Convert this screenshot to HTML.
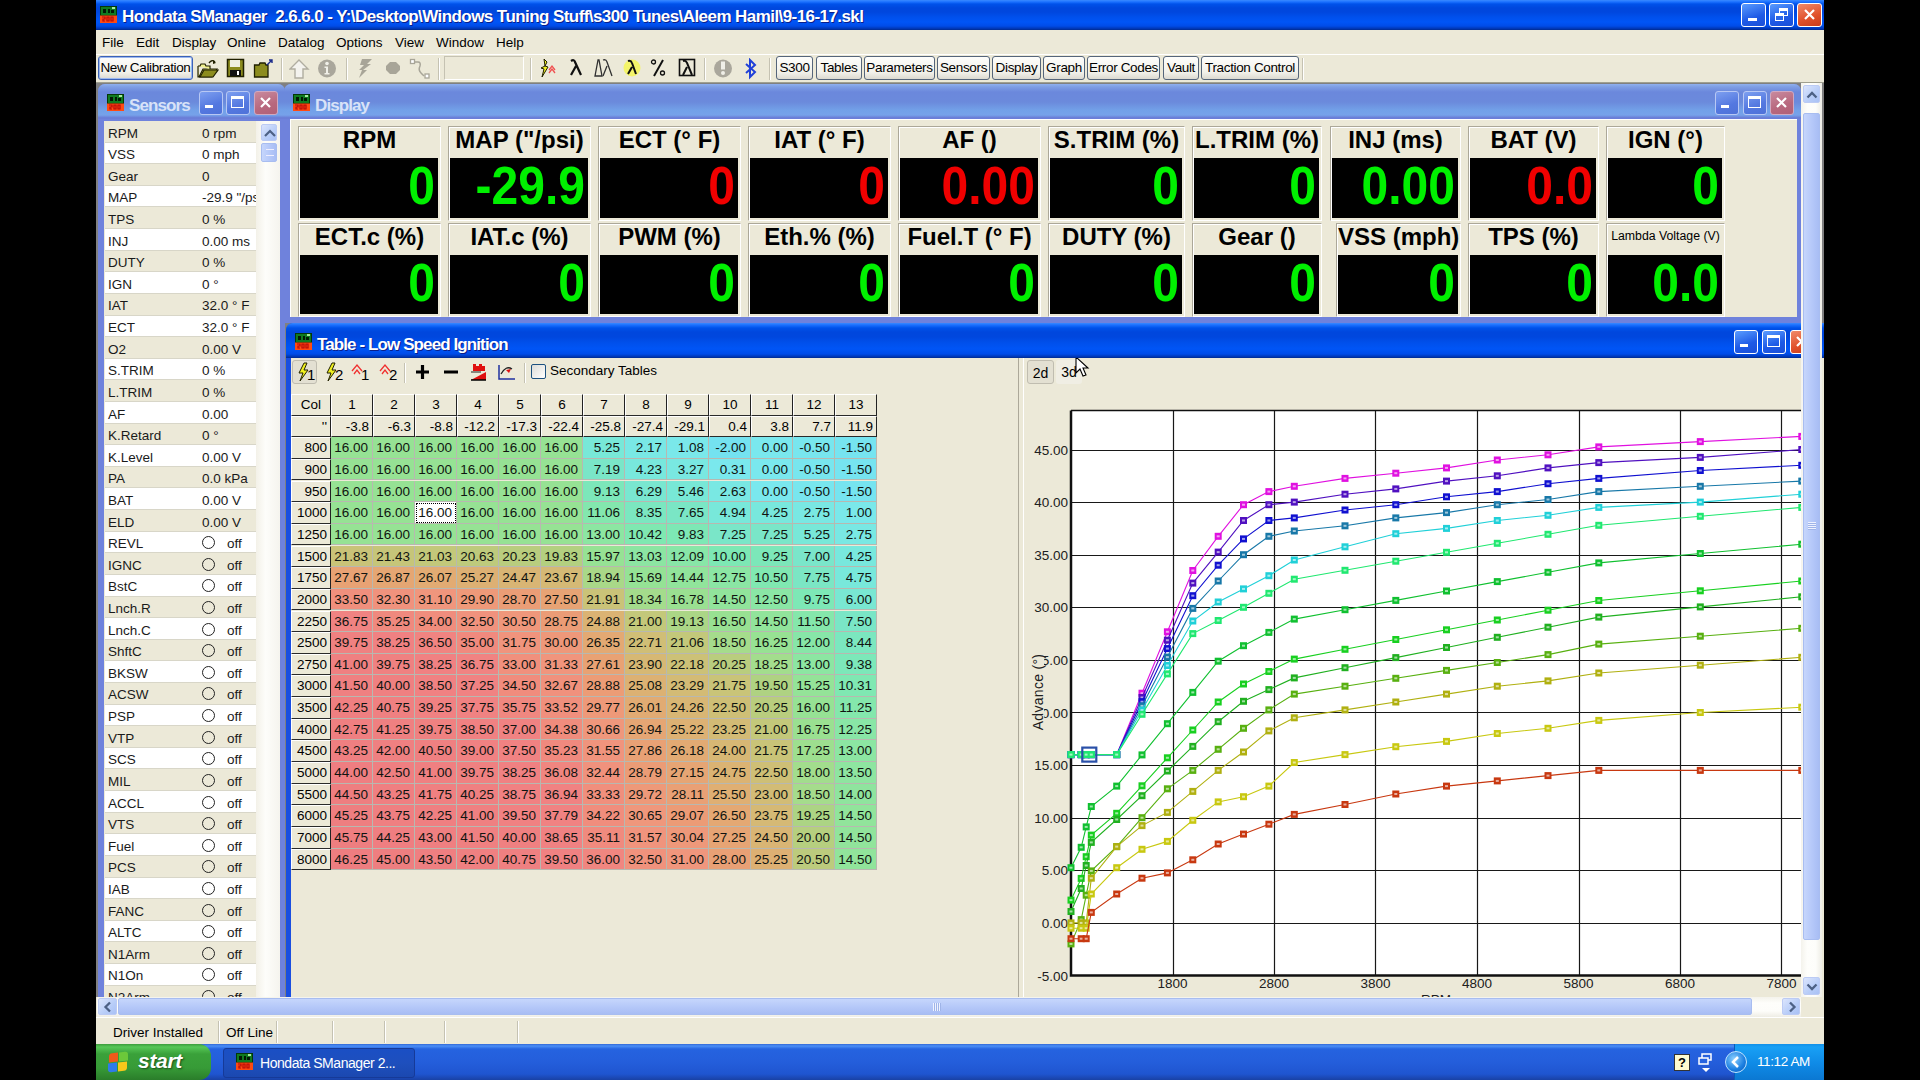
<!DOCTYPE html>
<html><head><meta charset="utf-8"><title>Hondata SManager</title>
<style>
*{box-sizing:border-box;margin:0;padding:0}
html,body{width:1920px;height:1080px;overflow:hidden;background:#000}
body{position:relative;font-family:"Liberation Sans",sans-serif;font-size:13.5px;color:#000}
.a{position:absolute}

.win{overflow:hidden;border-radius:7px 7px 0 0}
.win.in{background:#6f82dc}
.win.ac{background:#1a4fe0}
.wt{left:0;top:0;right:0;height:35px}
.win.in .wt{background:linear-gradient(180deg,#8fb0ee 0,#7e9de4 3px,#6b88dc 8px,#6b8adc 18px,#72a0e8 26px,#76a2ea 31px,#6b80d8 33.5px,#6b7cd8 35px)}
.win.ac .wt{background:linear-gradient(180deg,#3a8aff 0px,#1a70ff 2px,#0052ea 5px,#0047dd 9px,#0047de 14px,#0050ec 20px,#0055f6 26px,#004ce8 31px,#0038b8 33.5px,#002a90 35px)}
.wtt{top:11.5px;font-weight:bold;font-size:17px;white-space:nowrap;letter-spacing:-0.9px}
.win.in .wtt{color:#d8e2f8}
.win.ac .wtt{color:#fff;text-shadow:1px 1px 0 #0a1e8a}
.cbtn{width:24px;height:24px;border-radius:3px}
.win.in .cbtn{border:1px solid #b8c8f4;background:linear-gradient(160deg,#7d9ff0,#5478e0 60%,#4f72d8)}
.win.in .cbtn.cl{border:1px solid #d0a8c0;background:linear-gradient(160deg,#c88a9e,#b8687e 60%,#b06078)}
.win.ac .cbtn{border:1.5px solid #fff;background:linear-gradient(160deg,#5a9cff,#1e5ae6 60%,#1a4fd8)}
.win.ac .cbtn.cl{background:linear-gradient(160deg,#f08a6a,#e0502a 60%,#c83c1c)}
.cli{background:#ECE9D8;overflow:hidden}
.sbv{background:linear-gradient(90deg,#f3f1e8,#fdfdfa 40%,#f5f4ee)}
.sarrow{border:1px solid #bccbf4;border-radius:2px;background:linear-gradient(135deg,#dbe5fd,#b8cdf8 60%,#a9c1f5)}
.sthumb{border:1px solid #a8bdf0;border-radius:2px;background:linear-gradient(90deg,#c6d6fc,#b6c9f9 50%,#a8bdf4)}
.sthumbh{border:1px solid #a8bdf0;border-radius:2px;background:linear-gradient(180deg,#c6d6fc,#b6c9f9 50%,#a8bdf4)}


#scr{left:96px;top:0;width:1728px;height:1080px;background:#ECE9D8;overflow:hidden}
.tb{left:0;top:0;width:1728px;height:30px;
 background:linear-gradient(180deg,#3a8aff 0px,#1a70ff 2px,#0052ea 4px,#0047dd 8px,#0047de 12px,#0050ec 17px,#0055f6 22px,#004ce8 26px,#0038b8 28.5px,#002a90 30px);}
.ttl{left:26px;top:6.5px;color:#fff;font-weight:bold;font-size:17px;white-space:nowrap;text-shadow:1px 1px 0 #0a1e8a;letter-spacing:-0.57px}
.icon{width:17px;height:17px}
.icon .g{left:0;top:0;width:17px;height:9px;background:#0c7a18;border:1px solid #063c0a}
.icon .r{left:0;top:9px;width:17px;height:8px;background:#ff4a10}
.xbtn{width:25px;height:24px;border:1.5px solid #fff;border-radius:3px;background:linear-gradient(160deg,#5a9cff,#1e5ae6 60%,#1a4fd8)}
.xbtn.cl{background:linear-gradient(160deg,#f08a6a,#e0502a 60%,#c83c1c)}
.menu{left:0;top:30px;width:1728px;height:24px;background:#ECE9D8}
.mi{top:35px;font-size:13.5px;color:#000}
.tool{left:0;top:54px;width:1728px;height:29px;background:#ECE9D8;border-top:1px solid #fff;border-bottom:1px solid #a0a090}
.tbtn{top:56px;height:24px;white-space:nowrap;overflow:hidden;border:1.5px solid #55657a;border-radius:3px;background:linear-gradient(180deg,#fdfdfb,#f2f1ea 70%,#dcdad0);font-size:13.5px;line-height:21px;text-align:center;color:#000;letter-spacing:-0.35px}
.sep{top:58px;width:2px;height:22px;border-left:1px solid #c5c2b2;border-right:1px solid #fff}
.status{left:0;top:1017px;width:1728px;height:27px;background:#ECE9D8;border-top:1px solid #fff}
.ssep{top:1021px;width:2px;height:22px;border-left:1px solid #c5c2b2;border-right:1px solid #fff}
.task{left:0;top:1044px;width:1728px;height:36px;background:linear-gradient(180deg,#3168d5 0,#4b8ff6 2px,#2563e0 5px,#245edb 18px,#1f55d0 30px,#1941a5 36px)}
.start{left:0;top:1044px;width:115px;height:36px;border-radius:0 12px 12px 0;background:linear-gradient(180deg,#3c9c3c 0,#57c757 3px,#3aa13a 10px,#379b37 24px,#2a7d2a 36px);color:#fff;font-style:italic;font-weight:bold;font-size:21px;letter-spacing:-0.3px}
.tray{left:1638px;top:1044px;width:90px;height:36px;background:linear-gradient(180deg,#1290e8 0,#18a0f5 3px,#0f8ae6 20px,#0b78d2 36px);border-left:1px solid #0a5bb8}
.taskbtn{left:127px;top:1048px;width:192px;height:30px;border-radius:3px;background:linear-gradient(180deg,#1a4fc4,#1e4fbd 50%,#1b48b0);border:1px solid #163a98;color:#fff;font-size:14px}


.ti{top:58px}



.srow{left:0;width:151px;height:21.6px;border-bottom:1px solid #d8d6c8;font-size:13.5px;white-space:nowrap;overflow:hidden;color:#1a1a1a}
.srow.b{background:#ECE9D8}.srow.w{background:#fff}
.srow .l{left:3px;top:4.5px}
.srow .v{left:97px;top:4.5px}
.srow .o{left:97px;top:4.5px;width:13px;height:13px;border:1.3px solid #222;border-radius:50%}
.srow .f{left:122px;top:4.5px}


.gbox{border-top:1px solid #aca899;border-left:1px solid #aca899;border-right:1px solid #fff;border-bottom:1px solid #fff;box-shadow:inset 1px 1px 0 #fff}
.glab{left:1px;right:1px;top:-3px;height:31px;text-align:center;font-weight:bold;font-size:24px;line-height:31px;white-space:nowrap;color:#000}
.gblk{background:#000;text-align:right;font-weight:bold;font-size:48px;line-height:57px;white-space:nowrap;overflow:hidden}
.gg{color:#00f000}.gr{color:#f00000}


.hc{background:#ECE9D8;border-top:1px solid #fff;border-left:1px solid #fff;border-right:1px solid #222;border-bottom:1.5px solid #2a2a2a;font-size:13.5px;white-space:nowrap;line-height:19px}
.dc{border-right:1px solid #b8b8b0;border-bottom:1px solid #b8b8b0;font-size:13.5px;text-align:right;padding-right:4px;line-height:22px;color:#101410;white-space:nowrap}
.tbico{top:4px}


.trkv{background:linear-gradient(90deg,#f4f3ec,#fefefb 30%,#fdfdfa 70%,#eeede5)}
.trkh{background:linear-gradient(180deg,#f4f3ec,#fefefb 30%,#fdfdfa 70%,#eeede5)}




</style></head><body>

<div id="scr" class="a">
<div class="a tb"></div>
<svg class="a" style="left:4px;top:6px" width="17" height="17"><rect x="0.5" y="0.5" width="16" height="9" fill="#107a20" stroke="#043808"/><rect x="3" y="3" width="3" height="4" fill="#021a04"/><rect x="8" y="3" width="2" height="4" fill="#021a04"/><rect x="11" y="4" width="3" height="3" fill="#021a04"/><rect x="12" y="1" width="3" height="2" fill="#a8e8a0"/><rect x="0" y="9.5" width="17" height="7.5" fill="#ff4a12"/><path d="M2 11H5V13H3V15H5M7 11H9V15H7ZM11 11H13V15H11Z" stroke="#b80808" stroke-width="1.2" fill="none"/></svg>
<div class="a ttl">Hondata SManager&nbsp; 2.6.6.0 - Y:\Desktop\Windows Tuning Stuff\s300 Tunes\Aleem Hamil\9-16-17.skl</div>
<div class="a xbtn" style="left:1645px;top:3px"><div class="a" style="left:6px;top:14px;width:9px;height:3px;background:#fff"></div></div>
<div class="a xbtn" style="left:1673px;top:3px"><div class="a" style="left:9px;top:4px;width:9px;height:8px;border:1.5px solid #fff;border-top-width:3px"></div><div class="a" style="left:5px;top:9px;width:9px;height:8px;border:1.5px solid #fff;border-top-width:3px;background:#2a66e8"></div></div>
<div class="a xbtn cl" style="left:1701px;top:3px"><svg class="a" style="left:3px;top:3px" width="17" height="16"><path d="M4 3L13 12M13 3L4 12" stroke="#fff" stroke-width="2.2"/></svg></div>
<div class="a menu"></div>
<div class="a mi" style="left:6px">File</div>
<div class="a mi" style="left:40px">Edit</div>
<div class="a mi" style="left:76px">Display</div>
<div class="a mi" style="left:131px">Online</div>
<div class="a mi" style="left:182px">Datalog</div>
<div class="a mi" style="left:240px">Options</div>
<div class="a mi" style="left:299px">View</div>
<div class="a mi" style="left:340px">Window</div>
<div class="a mi" style="left:400px">Help</div>
<div class="a tool"></div>
<div class="a tbtn" style="left:2px;width:95px;border:1px solid #3b62b8;box-shadow:inset 0 0 0 1px #9cb8ef;">New Calibration</div>
<div class="a tbtn" style="left:680px;width:37px">S300</div>
<div class="a tbtn" style="left:720px;width:46px">Tables</div>
<div class="a tbtn" style="left:768px;width:71px">Parameters</div>
<div class="a tbtn" style="left:841px;width:53px">Sensors</div>
<div class="a tbtn" style="left:896px;width:49px">Display</div>
<div class="a tbtn" style="left:947px;width:42px">Graph</div>
<div class="a tbtn" style="left:991px;width:73px">Error Codes</div>
<div class="a tbtn" style="left:1067px;width:36px">Vault</div>
<div class="a tbtn" style="left:1105px;width:98px">Traction Control</div>
<div class="a sep" style="left:185px"></div>
<div class="a sep" style="left:250px"></div>
<div class="a sep" style="left:342px"></div>
<div class="a sep" style="left:434px"></div>
<div class="a sep" style="left:608px"></div>
<div class="a sep" style="left:673px"></div>
<div class="a sep" style="left:1206px"></div>
<div class="a" style="left:348px;top:56px;width:80px;height:24px;border:1px solid #c5c2b2;border-right-color:#fff;border-bottom-color:#fff;background:#ECE9D8"></div>
<div class="a status"></div>
<div class="a" style="left:17px;top:1025px;font-size:13.5px">Driver Installed</div>
<div class="a" style="left:130px;top:1025px;font-size:13.5px">Off Line</div>
<div class="a ssep" style="left:122px"></div>
<div class="a ssep" style="left:180px"></div>
<div class="a ssep" style="left:236px"></div>
<div class="a ssep" style="left:288px"></div>
<div class="a ssep" style="left:348px"></div>
<div class="a ssep" style="left:421px"></div>
<div class="a task"></div>
<div class="a start"><div class="a" style="left:42px;top:5px;text-shadow:1px 1px 2px #1a4a1a">start</div><div class="a" style="left:13px;top:9px;width:9px;height:9px;background:#f05a1a;border-radius:3px 0 0 0;transform:skewY(-6deg)"></div><div class="a" style="left:23px;top:8px;width:9px;height:9px;background:#6cc83a;border-radius:0 3px 0 0;transform:skewY(-6deg)"></div><div class="a" style="left:12px;top:19px;width:9px;height:9px;background:#2f7bea;border-radius:0 0 0 3px;transform:skewY(-6deg)"></div><div class="a" style="left:22px;top:18px;width:9px;height:9px;background:#f8c81a;border-radius:0 0 3px 0;transform:skewY(-6deg)"></div></div>
<div class="a taskbtn"><div class="a" style="left:36px;top:6px;white-space:nowrap;letter-spacing:-0.45px">Hondata SManager 2...</div></div>
<svg class="a" style="left:140px;top:1053px" width="17" height="17"><rect x="0.5" y="0.5" width="16" height="9" fill="#107a20" stroke="#043808"/><rect x="3" y="3" width="3" height="4" fill="#021a04"/><rect x="8" y="3" width="2" height="4" fill="#021a04"/><rect x="11" y="4" width="3" height="3" fill="#021a04"/><rect x="12" y="1" width="3" height="2" fill="#a8e8a0"/><rect x="0" y="9.5" width="17" height="7.5" fill="#ff4a12"/><path d="M2 11H5V13H3V15H5M7 11H9V15H7ZM11 11H13V15H11Z" stroke="#b80808" stroke-width="1.2" fill="none"/></svg>
<div class="a tray"><div class="a" style="left:22px;top:10px;color:#fff;font-size:13.5px;letter-spacing:-0.4px;white-space:nowrap">11:12 AM</div><div class="a" style="left:-10px;top:7px;width:22px;height:22px;border-radius:11px;background:radial-gradient(circle at 40% 35%,#8cd0ff,#1a7ee0 60%,#0a5ab8);border:1px solid #bfe4ff"></div><svg class="a" style="left:-4px;top:12px" width="10" height="12"><path d="M7 1L2 6L7 11" stroke="#fff" stroke-width="2.5" fill="none"/></svg></div>
<div class="a" style="left:1578px;top:1054px;width:16px;height:17px;background:#fffbd0;border:1px solid #333;font-weight:bold;font-size:13px;text-align:center;line-height:15px">?</div>
<svg class="a" style="left:1600px;top:1052px" width="20" height="22"><rect x="6" y="2" width="9" height="6" fill="none" stroke="#fff" stroke-width="1.5"/><rect x="3" y="6" width="9" height="6" fill="#2563e0" stroke="#fff" stroke-width="1.5"/><path d="M6 16L14 16L10 20Z" fill="#fff"/></svg>
<svg class="a" style="left:101px;top:58px" width="22" height="22"><path d="M1 8V19H15L20 11H6L2 19" fill="#e8e878" stroke="#202000" stroke-width="1.2"/><path d="M1 8H3L4 6H8L9 8H13V11" fill="#f0f090" stroke="#202000" stroke-width="1.2"/><path d="M3 19L7 12H21L16 19Z" fill="#8c8c1e" stroke="#202000" stroke-width="1.2"/><path d="M12 5Q15 1 18 4" stroke="#202000" stroke-width="1.3" fill="none"/><path d="M16 2L19 5L16 6" fill="#202000"/></svg>
<svg class="a" style="left:130px;top:58px" width="20" height="22"><rect x="1.5" y="1.5" width="16" height="17" fill="#8c8c1e" stroke="#202000" stroke-width="1.5"/><rect x="4" y="2" width="10" height="7" fill="#f0f0e0"/><rect x="4" y="12" width="11" height="6" fill="#101010"/><rect x="11" y="13" width="2" height="4" fill="#fff"/></svg>
<svg class="a" style="left:157px;top:58px" width="22" height="22"><path d="M1.5 7H6L7 5H12L13 7H15V19H1.5Z" fill="#8c8c1e" stroke="#202000" stroke-width="1.3"/><path d="M14 7L19 2M16 2H19V5" stroke="#1a2a8a" stroke-width="1.4" fill="none"/></svg>
<svg class="a" style="left:193px;top:58px" width="21" height="22"><path d="M10 2L19 11H14V20H6V11H1Z" fill="#f4f3ee" stroke="#b0ada0" stroke-width="1.4"/></svg>
<svg class="a" style="left:221px;top:58px" width="21" height="22"><circle cx="10" cy="10.5" r="9" fill="#aaa79c"/><circle cx="10" cy="5.5" r="1.8" fill="#f0efe8"/><path d="M7.5 8.5H11V15H12.5V16.5H7.5V15H9V10H7.5Z" fill="#f0efe8"/></svg>
<svg class="a" style="left:261px;top:58px" width="17" height="22"><path d="M5 1H15L10 6H14L6 12H10L2 20L5 12H2L7 7H3Z" fill="#a8a598"/></svg>
<svg class="a" style="left:289px;top:58px" width="17" height="22"><path d="M5 4H11L15 8V12L11 16H5L1 12V8Z" fill="#a8a598"/></svg>
<svg class="a" style="left:313px;top:58px" width="22" height="22"><rect x="1.5" y="1.5" width="4" height="4" fill="#fff" stroke="#a8a598" stroke-width="1.3"/><path d="M5 4H9Q12 4 11 8Q9 12 12 15L15 18" stroke="#a8a598" stroke-width="1.5" fill="none"/><rect x="16" y="16" width="4" height="4" fill="#fff" stroke="#a8a598" stroke-width="1.3"/></svg>
<svg class="a" style="left:443px;top:58px" width="20" height="22"><path d="M5 1L6 8L2 10L5 11L3 19L9 9L6 8L8 4Z" fill="#f0f020" stroke="#202000" stroke-width="1"/><path d="M10 12L13 8L16 12M10 15L13 11L16 15" stroke="#f05050" stroke-width="1.3" fill="none"/></svg>
<svg class="a" style="left:473px;top:58px" width="15" height="22"><path d="M2 3Q5 1 6 4L12 17M7 8L2 17" stroke="#101010" stroke-width="2.2" fill="none"/></svg>
<svg class="a" style="left:498px;top:58px" width="20" height="22"><path d="M4 2L1 18H8L5 2Z" fill="none" stroke="#303030" stroke-width="1.3"/><path d="M9 2Q12 1 13 4L18 18M13 8L9 18" stroke="#303030" stroke-width="1.3" fill="none"/></svg>
<svg class="a" style="left:526px;top:58px" width="20" height="22"><circle cx="10" cy="10" r="8.5" fill="#f4f46a"/><path d="M6 3Q9 2 10 5L14 16M10 9L6 16" stroke="#101010" stroke-width="2" fill="none"/></svg>
<svg class="a" style="left:554px;top:58px" width="17" height="22"><circle cx="3.5" cy="4" r="2" fill="none" stroke="#101010" stroke-width="1.3"/><circle cx="12.5" cy="15" r="2" fill="none" stroke="#101010" stroke-width="1.3"/><path d="M13 2L4 18" stroke="#101010" stroke-width="2"/></svg>
<svg class="a" style="left:582px;top:58px" width="18" height="22"><rect x="1.5" y="1.5" width="15" height="16" fill="none" stroke="#101010" stroke-width="1.6"/><path d="M5 3Q8 2 9 5L14 17M9 9L5 17" stroke="#101010" stroke-width="2" fill="none"/></svg>
<svg class="a" style="left:617px;top:58px" width="20" height="22"><circle cx="10" cy="10.5" r="9" fill="#aaa79c"/><rect x="8" y="3.5" width="4" height="8" fill="#f0efe8"/><circle cx="10" cy="15" r="2" fill="#f0efe8"/></svg>
<svg class="a" style="left:648px;top:58px" width="15" height="22"><path d="M2 6L11 14L6 19V2L11 7L2 15" stroke="#2040d8" stroke-width="2" fill="none"/></svg>
<div id="mdi" class="a" style="left:0;top:83px;width:1728px;height:914px;overflow:hidden;background:#808080">
<div class="a win in" style="left:2px;top:1px;width:187px;height:940px">
<div class="a wt"></div>
<svg class="a" style="left:9px;top:10px" width="17" height="17"><rect x="0.5" y="0.5" width="16" height="9" fill="#107a20" stroke="#043808"/><rect x="3" y="3" width="3" height="4" fill="#021a04"/><rect x="8" y="3" width="2" height="4" fill="#021a04"/><rect x="11" y="4" width="3" height="3" fill="#021a04"/><rect x="12" y="1" width="3" height="2" fill="#a8e8a0"/><rect x="0" y="9.5" width="17" height="7.5" fill="#ff4a12"/><path d="M2 11H5V13H3V15H5M7 11H9V15H7ZM11 11H13V15H11Z" stroke="#b80808" stroke-width="1.2" fill="none"/></svg>
<div class="a wtt" style="left:31px">Sensors</div>
<div class="a cbtn" style="left:101px;top:7px"><div class="a" style="left:5px;top:13px;width:8px;height:3px;background:#fff"></div></div>
<div class="a cbtn" style="left:128px;top:7px"><div class="a" style="left:4px;top:4px;width:13px;height:12px;border:1.5px solid #fff;border-top-width:3px"></div></div>
<div class="a cbtn cl" style="left:156px;top:7px"><svg class="a" style="left:2px;top:2px" width="17" height="17"><path d="M4 4L13 13M13 4L4 13" stroke="#fff" stroke-width="2.2"/></svg></div>
<div class="a cli" style="left:6px;top:37px;width:176px;height:900px"><div class="a" style="left:1px;top:0;width:151px;height:900px;background:#fff"><div class="a srow b" style="top:0.00px"><div class="a l">RPM</div><div class="a v">0 rpm</div></div><div class="a srow w" style="top:21.61px"><div class="a l">VSS</div><div class="a v">0 mph</div></div><div class="a srow b" style="top:43.23px"><div class="a l">Gear</div><div class="a v">0</div></div><div class="a srow w" style="top:64.84px"><div class="a l">MAP</div><div class="a v">-29.9 "/psi</div></div><div class="a srow b" style="top:86.46px"><div class="a l">TPS</div><div class="a v">0 %</div></div><div class="a srow w" style="top:108.07px"><div class="a l">INJ</div><div class="a v">0.00 ms</div></div><div class="a srow b" style="top:129.69px"><div class="a l">DUTY</div><div class="a v">0 %</div></div><div class="a srow w" style="top:151.30px"><div class="a l">IGN</div><div class="a v">0 &deg;</div></div><div class="a srow b" style="top:172.92px"><div class="a l">IAT</div><div class="a v">32.0 &deg; F</div></div><div class="a srow w" style="top:194.53px"><div class="a l">ECT</div><div class="a v">32.0 &deg; F</div></div><div class="a srow b" style="top:216.15px"><div class="a l">O2</div><div class="a v">0.00 V</div></div><div class="a srow w" style="top:237.76px"><div class="a l">S.TRIM</div><div class="a v">0 %</div></div><div class="a srow b" style="top:259.38px"><div class="a l">L.TRIM</div><div class="a v">0 %</div></div><div class="a srow w" style="top:281.00px"><div class="a l">AF</div><div class="a v">0.00</div></div><div class="a srow b" style="top:302.61px"><div class="a l">K.Retard</div><div class="a v">0 &deg;</div></div><div class="a srow w" style="top:324.22px"><div class="a l">K.Level</div><div class="a v">0.00 V</div></div><div class="a srow b" style="top:345.84px"><div class="a l">PA</div><div class="a v">0.0 kPa</div></div><div class="a srow w" style="top:367.45px"><div class="a l">BAT</div><div class="a v">0.00 V</div></div><div class="a srow b" style="top:389.07px"><div class="a l">ELD</div><div class="a v">0.00 V</div></div><div class="a srow w" style="top:410.68px"><div class="a l">REVL</div><div class="a o"></div><div class="a f">off</div></div><div class="a srow b" style="top:432.30px"><div class="a l">IGNC</div><div class="a o"></div><div class="a f">off</div></div><div class="a srow w" style="top:453.91px"><div class="a l">BstC</div><div class="a o"></div><div class="a f">off</div></div><div class="a srow b" style="top:475.53px"><div class="a l">Lnch.R</div><div class="a o"></div><div class="a f">off</div></div><div class="a srow w" style="top:497.14px"><div class="a l">Lnch.C</div><div class="a o"></div><div class="a f">off</div></div><div class="a srow b" style="top:518.76px"><div class="a l">ShftC</div><div class="a o"></div><div class="a f">off</div></div><div class="a srow w" style="top:540.38px"><div class="a l">BKSW</div><div class="a o"></div><div class="a f">off</div></div><div class="a srow b" style="top:561.99px"><div class="a l">ACSW</div><div class="a o"></div><div class="a f">off</div></div><div class="a srow w" style="top:583.60px"><div class="a l">PSP</div><div class="a o"></div><div class="a f">off</div></div><div class="a srow b" style="top:605.22px"><div class="a l">VTP</div><div class="a o"></div><div class="a f">off</div></div><div class="a srow w" style="top:626.83px"><div class="a l">SCS</div><div class="a o"></div><div class="a f">off</div></div><div class="a srow b" style="top:648.45px"><div class="a l">MIL</div><div class="a o"></div><div class="a f">off</div></div><div class="a srow w" style="top:670.06px"><div class="a l">ACCL</div><div class="a o"></div><div class="a f">off</div></div><div class="a srow b" style="top:691.68px"><div class="a l">VTS</div><div class="a o"></div><div class="a f">off</div></div><div class="a srow w" style="top:713.29px"><div class="a l">Fuel</div><div class="a o"></div><div class="a f">off</div></div><div class="a srow b" style="top:734.91px"><div class="a l">PCS</div><div class="a o"></div><div class="a f">off</div></div><div class="a srow w" style="top:756.52px"><div class="a l">IAB</div><div class="a o"></div><div class="a f">off</div></div><div class="a srow b" style="top:778.14px"><div class="a l">FANC</div><div class="a o"></div><div class="a f">off</div></div><div class="a srow w" style="top:799.75px"><div class="a l">ALTC</div><div class="a o"></div><div class="a f">off</div></div><div class="a srow b" style="top:821.37px"><div class="a l">N1Arm</div><div class="a o"></div><div class="a f">off</div></div><div class="a srow w" style="top:842.98px"><div class="a l">N1On</div><div class="a o"></div><div class="a f">off</div></div><div class="a srow b" style="top:864.60px"><div class="a l">N2Arm</div><div class="a o"></div><div class="a f">off</div></div></div><div class="a sbv" style="left:152px;top:0;width:24px;height:900px"></div><div class="a sarrow" style="left:157px;top:3px;width:16px;height:17px"><svg class="a" style="left:2px;top:4px" width="12" height="8"><path d="M1 7L6 2L11 7" stroke="#4d6185" stroke-width="2.2" fill="none"/></svg></div><div class="a sthumb" style="left:157px;top:22px;width:16px;height:19px"><div class="a" style="left:4px;top:5px;width:8px;height:7px;border-top:1px solid #eef;border-bottom:1px solid #eef"></div></div></div>
</div>
<div class="a win in" style="left:188px;top:1px;width:1517px;height:239px">
<div class="a wt"></div>
<svg class="a" style="left:9px;top:10px" width="17" height="17"><rect x="0.5" y="0.5" width="16" height="9" fill="#107a20" stroke="#043808"/><rect x="3" y="3" width="3" height="4" fill="#021a04"/><rect x="8" y="3" width="2" height="4" fill="#021a04"/><rect x="11" y="4" width="3" height="3" fill="#021a04"/><rect x="12" y="1" width="3" height="2" fill="#a8e8a0"/><rect x="0" y="9.5" width="17" height="7.5" fill="#ff4a12"/><path d="M2 11H5V13H3V15H5M7 11H9V15H7ZM11 11H13V15H11Z" stroke="#b80808" stroke-width="1.2" fill="none"/></svg>
<div class="a wtt" style="left:31px">Display</div>
<div class="a cbtn" style="left:1431px;top:7px"><div class="a" style="left:5px;top:13px;width:8px;height:3px;background:#fff"></div></div>
<div class="a cbtn" style="left:1459px;top:7px"><div class="a" style="left:4px;top:4px;width:13px;height:12px;border:1.5px solid #fff;border-top-width:3px"></div></div>
<div class="a cbtn cl" style="left:1486px;top:7px"><svg class="a" style="left:2px;top:2px" width="17" height="17"><path d="M4 4L13 13M13 4L4 13" stroke="#fff" stroke-width="2.2"/></svg></div>
<div class="a cli" style="left:6px;top:35px;width:1507px;height:198px;border-left:1px solid #fff;border-top:1px solid #fff"><div class="a gbox" style="left:7px;top:6px;width:143px;height:95px"><div class="a glab" style="">RPM</div><div class="a gblk gg" style="left:1px;top:31px;width:138px;height:60px;padding-right:3px"><span style="display:inline-block;transform:scaleY(1.1);transform-origin:50% 62%">0</span></div></div><div class="a gbox" style="left:157px;top:6px;width:143px;height:95px"><div class="a glab" style="">MAP ("/psi)</div><div class="a gblk gg" style="left:1px;top:31px;width:138px;height:60px;padding-right:3px"><span style="display:inline-block;transform:scaleY(1.1);transform-origin:50% 62%">-29.9</span></div></div><div class="a gbox" style="left:307px;top:6px;width:143px;height:95px"><div class="a glab" style="">ECT (&deg; F)</div><div class="a gblk gr" style="left:1px;top:31px;width:138px;height:60px;padding-right:3px"><span style="display:inline-block;transform:scaleY(1.1);transform-origin:50% 62%">0</span></div></div><div class="a gbox" style="left:457px;top:6px;width:143px;height:95px"><div class="a glab" style="">IAT (&deg; F)</div><div class="a gblk gr" style="left:1px;top:31px;width:138px;height:60px;padding-right:3px"><span style="display:inline-block;transform:scaleY(1.1);transform-origin:50% 62%">0</span></div></div><div class="a gbox" style="left:607px;top:6px;width:143px;height:95px"><div class="a glab" style="">AF ()</div><div class="a gblk gr" style="left:1px;top:31px;width:138px;height:60px;padding-right:3px"><span style="display:inline-block;transform:scaleY(1.1);transform-origin:50% 62%">0.00</span></div></div><div class="a gbox" style="left:757px;top:6px;width:137px;height:95px"><div class="a glab" style="">S.TRIM (%)</div><div class="a gblk gg" style="left:1px;top:31px;width:132px;height:60px;padding-right:3px"><span style="display:inline-block;transform:scaleY(1.1);transform-origin:50% 62%">0</span></div></div><div class="a gbox" style="left:901px;top:6px;width:130px;height:95px"><div class="a glab" style="">L.TRIM (%)</div><div class="a gblk gg" style="left:1px;top:31px;width:125px;height:60px;padding-right:3px"><span style="display:inline-block;transform:scaleY(1.1);transform-origin:50% 62%">0</span></div></div><div class="a gbox" style="left:1039px;top:6px;width:131px;height:95px"><div class="a glab" style="">INJ (ms)</div><div class="a gblk gg" style="left:1px;top:31px;width:126px;height:60px;padding-right:3px"><span style="display:inline-block;transform:scaleY(1.1);transform-origin:50% 62%">0.00</span></div></div><div class="a gbox" style="left:1177px;top:6px;width:131px;height:95px"><div class="a glab" style="">BAT (V)</div><div class="a gblk gr" style="left:1px;top:31px;width:126px;height:60px;padding-right:3px"><span style="display:inline-block;transform:scaleY(1.1);transform-origin:50% 62%">0.0</span></div></div><div class="a gbox" style="left:1315px;top:6px;width:119px;height:95px"><div class="a glab" style="">IGN (&deg;)</div><div class="a gblk gg" style="left:1px;top:31px;width:114px;height:60px;padding-right:3px"><span style="display:inline-block;transform:scaleY(1.1);transform-origin:50% 62%">0</span></div></div><div class="a gbox" style="left:7px;top:103px;width:143px;height:94px"><div class="a glab" style="">ECT.c (%)</div><div class="a gblk gg" style="left:1px;top:31px;width:138px;height:59px;padding-right:3px"><span style="display:inline-block;transform:scaleY(1.1);transform-origin:50% 62%">0</span></div></div><div class="a gbox" style="left:157px;top:103px;width:143px;height:94px"><div class="a glab" style="">IAT.c (%)</div><div class="a gblk gg" style="left:1px;top:31px;width:138px;height:59px;padding-right:3px"><span style="display:inline-block;transform:scaleY(1.1);transform-origin:50% 62%">0</span></div></div><div class="a gbox" style="left:307px;top:103px;width:143px;height:94px"><div class="a glab" style="">PWM (%)</div><div class="a gblk gg" style="left:1px;top:31px;width:138px;height:59px;padding-right:3px"><span style="display:inline-block;transform:scaleY(1.1);transform-origin:50% 62%">0</span></div></div><div class="a gbox" style="left:457px;top:103px;width:143px;height:94px"><div class="a glab" style="">Eth.% (%)</div><div class="a gblk gg" style="left:1px;top:31px;width:138px;height:59px;padding-right:3px"><span style="display:inline-block;transform:scaleY(1.1);transform-origin:50% 62%">0</span></div></div><div class="a gbox" style="left:607px;top:103px;width:143px;height:94px"><div class="a glab" style="">Fuel.T (&deg; F)</div><div class="a gblk gg" style="left:1px;top:31px;width:138px;height:59px;padding-right:3px"><span style="display:inline-block;transform:scaleY(1.1);transform-origin:50% 62%">0</span></div></div><div class="a gbox" style="left:757px;top:103px;width:137px;height:94px"><div class="a glab" style="">DUTY (%)</div><div class="a gblk gg" style="left:1px;top:31px;width:132px;height:59px;padding-right:3px"><span style="display:inline-block;transform:scaleY(1.1);transform-origin:50% 62%">0</span></div></div><div class="a gbox" style="left:901px;top:103px;width:130px;height:94px"><div class="a glab" style="">Gear ()</div><div class="a gblk gg" style="left:1px;top:31px;width:125px;height:59px;padding-right:3px"><span style="display:inline-block;transform:scaleY(1.1);transform-origin:50% 62%">0</span></div></div><div class="a gbox" style="left:1045px;top:103px;width:125px;height:94px"><div class="a glab" style="">VSS (mph)</div><div class="a gblk gg" style="left:1px;top:31px;width:120px;height:59px;padding-right:3px"><span style="display:inline-block;transform:scaleY(1.1);transform-origin:50% 62%">0</span></div></div><div class="a gbox" style="left:1177px;top:103px;width:131px;height:94px"><div class="a glab" style="">TPS (%)</div><div class="a gblk gg" style="left:1px;top:31px;width:126px;height:59px;padding-right:3px"><span style="display:inline-block;transform:scaleY(1.1);transform-origin:50% 62%">0</span></div></div><div class="a gbox" style="left:1315px;top:103px;width:119px;height:94px"><div class="a glab" style="font-size:12.3px;font-weight:normal;">Lambda Voltage (V)</div><div class="a gblk gg" style="left:1px;top:31px;width:114px;height:59px;padding-right:3px"><span style="display:inline-block;transform:scaleY(1.1);transform-origin:50% 62%">0.0</span></div></div></div>
</div>
<div class="a win ac" style="left:190px;top:240px;width:1620px;height:760px">
<div class="a wt"></div>
<svg class="a" style="left:9px;top:10px" width="17" height="17"><rect x="0.5" y="0.5" width="16" height="9" fill="#107a20" stroke="#043808"/><rect x="3" y="3" width="3" height="4" fill="#021a04"/><rect x="8" y="3" width="2" height="4" fill="#021a04"/><rect x="11" y="4" width="3" height="3" fill="#021a04"/><rect x="12" y="1" width="3" height="2" fill="#a8e8a0"/><rect x="0" y="9.5" width="17" height="7.5" fill="#ff4a12"/><path d="M2 11H5V13H3V15H5M7 11H9V15H7ZM11 11H13V15H11Z" stroke="#b80808" stroke-width="1.2" fill="none"/></svg>
<div class="a wtt" style="left:31px">Table - Low Speed Ignition</div>
<div class="a cbtn" style="left:1448px;top:7px"><div class="a" style="left:5px;top:13px;width:8px;height:3px;background:#fff"></div></div>
<div class="a cbtn" style="left:1476px;top:7px"><div class="a" style="left:4px;top:4px;width:13px;height:12px;border:1.5px solid #fff;border-top-width:3px"></div></div>
<div class="a cbtn cl" style="left:1504px;top:7px"><svg class="a" style="left:2px;top:2px" width="17" height="17"><path d="M4 4L13 13M13 4L4 13" stroke="#fff" stroke-width="2.2"/></svg></div>
<div class="a cli" style="left:5px;top:35px;width:1600px;height:700px"><div class="a" style="left:1px;top:2px;width:25px;height:24px;border:1px solid #c0bdb0;border-radius:3px;background:#e3e0d2"></div><svg class="a" style="left:5px;top:4px" width="24" height="22"><path d="M8 1L3 11L7 11L4 19L12 8L8 8L11 1Z" fill="#f0f020" stroke="#202000" stroke-width="1"/></svg><div class="a" style="left:16px;top:8px;font-size:15px">1</div><svg class="a" style="left:33px;top:4px" width="24" height="22"><path d="M8 1L3 11L7 11L4 19L12 8L8 8L11 1Z" fill="#f0f020" stroke="#202000" stroke-width="1"/></svg><div class="a" style="left:44px;top:8px;font-size:15px">2</div><svg class="a" style="left:59px;top:4px" width="24" height="22"><path d="M2 9L7 3L12 9M4 12L7 8L10 12" stroke="#f03030" stroke-width="1.3" fill="none"/></svg><div class="a" style="left:70px;top:8px;font-size:15px">1</div><svg class="a" style="left:87px;top:4px" width="24" height="22"><path d="M2 9L7 3L12 9M4 12L7 8L10 12" stroke="#f03030" stroke-width="1.3" fill="none"/></svg><div class="a" style="left:98px;top:8px;font-size:15px">2</div><div class="a" style="left:113px;top:5px;width:2px;height:20px;border-left:1px solid #c5c2b2;border-right:1px solid #fff"></div><svg class="a" style="left:124px;top:6px" width="16" height="16"><path d="M7.5 1V15M1 8H14" stroke="#000" stroke-width="3.2"/></svg><svg class="a" style="left:152px;top:6px" width="16" height="16"><path d="M1 8H15" stroke="#000" stroke-width="3.2"/></svg><svg class="a" style="left:178px;top:4px" width="20" height="20"><path d="M4 2H7V4H10V2H13V4H16V9H4Z" fill="#e01010"/><path d="M2 18L17 10V18Z" fill="#e01010"/><path d="M2 18H17" stroke="#000" stroke-width="1.5"/><path d="M2 10H12" stroke="#202020" stroke-width="1"/></svg><svg class="a" style="left:206px;top:4px" width="20" height="20"><path d="M2 3V17H18" stroke="#2030a0" stroke-width="1.5" fill="none"/><path d="M4 12Q9 3 15 7" stroke="#202020" stroke-width="1.3" fill="none"/><path d="M9 8L12 11L14 7Z" fill="#e01010"/></svg><div class="a" style="left:233px;top:5px;width:2px;height:20px;border-left:1px solid #c5c2b2;border-right:1px solid #fff"></div><div class="a" style="left:240px;top:6px;width:15px;height:15px;border:1px solid #1c5180;border-radius:2px;background:linear-gradient(135deg,#dcdcd7,#fff)"></div><div class="a" style="left:259px;top:5px;font-size:13.5px;white-space:nowrap">Secondary Tables</div><div class="a" style="left:0px;top:36px;width:585px;height:476px"><div class="a hc" style="left:0.0px;top:0.0px;width:40.0px;height:21.6px;text-align:center">Col</div><div class="a hc" style="left:0.0px;top:21.6px;width:40.0px;height:21.6px;text-align:right;padding-right:3px">''</div><div class="a hc" style="left:40.0px;top:0.0px;width:42.0px;height:21.6px;text-align:center">1</div><div class="a hc" style="left:40.0px;top:21.6px;width:42.0px;height:21.6px;text-align:right;padding-right:3px">-3.8</div><div class="a hc" style="left:82.0px;top:0.0px;width:42.0px;height:21.6px;text-align:center">2</div><div class="a hc" style="left:82.0px;top:21.6px;width:42.0px;height:21.6px;text-align:right;padding-right:3px">-6.3</div><div class="a hc" style="left:124.0px;top:0.0px;width:42.0px;height:21.6px;text-align:center">3</div><div class="a hc" style="left:124.0px;top:21.6px;width:42.0px;height:21.6px;text-align:right;padding-right:3px">-8.8</div><div class="a hc" style="left:166.0px;top:0.0px;width:42.0px;height:21.6px;text-align:center">4</div><div class="a hc" style="left:166.0px;top:21.6px;width:42.0px;height:21.6px;text-align:right;padding-right:3px">-12.2</div><div class="a hc" style="left:208.0px;top:0.0px;width:42.0px;height:21.6px;text-align:center">5</div><div class="a hc" style="left:208.0px;top:21.6px;width:42.0px;height:21.6px;text-align:right;padding-right:3px">-17.3</div><div class="a hc" style="left:250.0px;top:0.0px;width:42.0px;height:21.6px;text-align:center">6</div><div class="a hc" style="left:250.0px;top:21.6px;width:42.0px;height:21.6px;text-align:right;padding-right:3px">-22.4</div><div class="a hc" style="left:292.0px;top:0.0px;width:42.0px;height:21.6px;text-align:center">7</div><div class="a hc" style="left:292.0px;top:21.6px;width:42.0px;height:21.6px;text-align:right;padding-right:3px">-25.8</div><div class="a hc" style="left:334.0px;top:0.0px;width:42.0px;height:21.6px;text-align:center">8</div><div class="a hc" style="left:334.0px;top:21.6px;width:42.0px;height:21.6px;text-align:right;padding-right:3px">-27.4</div><div class="a hc" style="left:376.0px;top:0.0px;width:42.0px;height:21.6px;text-align:center">9</div><div class="a hc" style="left:376.0px;top:21.6px;width:42.0px;height:21.6px;text-align:right;padding-right:3px">-29.1</div><div class="a hc" style="left:418.0px;top:0.0px;width:42.0px;height:21.6px;text-align:center">10</div><div class="a hc" style="left:418.0px;top:21.6px;width:42.0px;height:21.6px;text-align:right;padding-right:3px">0.4</div><div class="a hc" style="left:460.0px;top:0.0px;width:42.0px;height:21.6px;text-align:center">11</div><div class="a hc" style="left:460.0px;top:21.6px;width:42.0px;height:21.6px;text-align:right;padding-right:3px">3.8</div><div class="a hc" style="left:502.0px;top:0.0px;width:42.0px;height:21.6px;text-align:center">12</div><div class="a hc" style="left:502.0px;top:21.6px;width:42.0px;height:21.6px;text-align:right;padding-right:3px">7.7</div><div class="a hc" style="left:544.0px;top:0.0px;width:42.0px;height:21.6px;text-align:center">13</div><div class="a hc" style="left:544.0px;top:21.6px;width:42.0px;height:21.6px;text-align:right;padding-right:3px">11.9</div><div class="a hc" style="left:0.0px;top:43.3px;width:40.0px;height:21.6px;text-align:right;padding-right:3px">800</div><div class="a dc" style="left:40px;top:43.3px;width:42px;height:21.6px;background:rgb(150,226,148);">16.00</div><div class="a dc" style="left:82px;top:43.3px;width:42px;height:21.6px;background:rgb(150,226,148);">16.00</div><div class="a dc" style="left:124px;top:43.3px;width:42px;height:21.6px;background:rgb(150,226,148);">16.00</div><div class="a dc" style="left:166px;top:43.3px;width:42px;height:21.6px;background:rgb(150,226,148);">16.00</div><div class="a dc" style="left:208px;top:43.3px;width:42px;height:21.6px;background:rgb(150,226,148);">16.00</div><div class="a dc" style="left:250px;top:43.3px;width:42px;height:21.6px;background:rgb(150,226,148);">16.00</div><div class="a dc" style="left:292px;top:43.3px;width:42px;height:21.6px;background:rgb(120,232,216);">5.25</div><div class="a dc" style="left:334px;top:43.3px;width:42px;height:21.6px;background:rgb(121,232,229);">2.17</div><div class="a dc" style="left:376px;top:43.3px;width:42px;height:21.6px;background:rgb(122,232,234);">1.08</div><div class="a dc" style="left:418px;top:43.3px;width:42px;height:21.6px;background:rgb(116,226,240);">-2.00</div><div class="a dc" style="left:460px;top:43.3px;width:42px;height:21.6px;background:rgb(122,232,238);">0.00</div><div class="a dc" style="left:502px;top:43.3px;width:42px;height:21.6px;background:rgb(120,230,238);">-0.50</div><div class="a dc" style="left:544px;top:43.3px;width:42px;height:21.6px;background:rgb(118,228,240);">-1.50</div><div class="a hc" style="left:0.0px;top:64.9px;width:40.0px;height:21.6px;text-align:right;padding-right:3px">900</div><div class="a dc" style="left:40px;top:64.9px;width:42px;height:21.6px;background:rgb(150,226,148);">16.00</div><div class="a dc" style="left:82px;top:64.9px;width:42px;height:21.6px;background:rgb(150,226,148);">16.00</div><div class="a dc" style="left:124px;top:64.9px;width:42px;height:21.6px;background:rgb(150,226,148);">16.00</div><div class="a dc" style="left:166px;top:64.9px;width:42px;height:21.6px;background:rgb(150,226,148);">16.00</div><div class="a dc" style="left:208px;top:64.9px;width:42px;height:21.6px;background:rgb(150,226,148);">16.00</div><div class="a dc" style="left:250px;top:64.9px;width:42px;height:21.6px;background:rgb(150,226,148);">16.00</div><div class="a dc" style="left:292px;top:64.9px;width:42px;height:21.6px;background:rgb(122,230,200);">7.19</div><div class="a dc" style="left:334px;top:64.9px;width:42px;height:21.6px;background:rgb(120,232,221);">4.23</div><div class="a dc" style="left:376px;top:64.9px;width:42px;height:21.6px;background:rgb(121,232,225);">3.27</div><div class="a dc" style="left:418px;top:64.9px;width:42px;height:21.6px;background:rgb(122,232,237);">0.31</div><div class="a dc" style="left:460px;top:64.9px;width:42px;height:21.6px;background:rgb(122,232,238);">0.00</div><div class="a dc" style="left:502px;top:64.9px;width:42px;height:21.6px;background:rgb(120,230,238);">-0.50</div><div class="a dc" style="left:544px;top:64.9px;width:42px;height:21.6px;background:rgb(118,228,240);">-1.50</div><div class="a hc" style="left:0.0px;top:86.6px;width:40.0px;height:21.6px;text-align:right;padding-right:3px">950</div><div class="a dc" style="left:40px;top:86.6px;width:42px;height:21.6px;background:rgb(150,226,148);">16.00</div><div class="a dc" style="left:82px;top:86.6px;width:42px;height:21.6px;background:rgb(150,226,148);">16.00</div><div class="a dc" style="left:124px;top:86.6px;width:42px;height:21.6px;background:rgb(150,226,148);">16.00</div><div class="a dc" style="left:166px;top:86.6px;width:42px;height:21.6px;background:rgb(150,226,148);">16.00</div><div class="a dc" style="left:208px;top:86.6px;width:42px;height:21.6px;background:rgb(150,226,148);">16.00</div><div class="a dc" style="left:250px;top:86.6px;width:42px;height:21.6px;background:rgb(150,226,148);">16.00</div><div class="a dc" style="left:292px;top:86.6px;width:42px;height:21.6px;background:rgb(124,231,186);">9.13</div><div class="a dc" style="left:334px;top:86.6px;width:42px;height:21.6px;background:rgb(121,231,208);">6.29</div><div class="a dc" style="left:376px;top:86.6px;width:42px;height:21.6px;background:rgb(120,232,214);">5.46</div><div class="a dc" style="left:418px;top:86.6px;width:42px;height:21.6px;background:rgb(121,232,227);">2.63</div><div class="a dc" style="left:460px;top:86.6px;width:42px;height:21.6px;background:rgb(122,232,238);">0.00</div><div class="a dc" style="left:502px;top:86.6px;width:42px;height:21.6px;background:rgb(120,230,238);">-0.50</div><div class="a dc" style="left:544px;top:86.6px;width:42px;height:21.6px;background:rgb(118,228,240);">-1.50</div><div class="a hc" style="left:0.0px;top:108.2px;width:40.0px;height:21.6px;text-align:right;padding-right:3px">1000</div><div class="a dc" style="left:40px;top:108.2px;width:42px;height:21.6px;background:rgb(150,226,148);">16.00</div><div class="a dc" style="left:82px;top:108.2px;width:42px;height:21.6px;background:rgb(150,226,148);">16.00</div><div class="a dc" style="left:124px;top:108.2px;width:42px;height:21.6px;background:#fff;outline:1px dotted #000;outline-offset:-2px;">16.00</div><div class="a dc" style="left:166px;top:108.2px;width:42px;height:21.6px;background:rgb(150,226,148);">16.00</div><div class="a dc" style="left:208px;top:108.2px;width:42px;height:21.6px;background:rgb(150,226,148);">16.00</div><div class="a dc" style="left:250px;top:108.2px;width:42px;height:21.6px;background:rgb(150,226,148);">16.00</div><div class="a dc" style="left:292px;top:108.2px;width:42px;height:21.6px;background:rgb(131,231,174);">11.06</div><div class="a dc" style="left:334px;top:108.2px;width:42px;height:21.6px;background:rgb(123,231,192);">8.35</div><div class="a dc" style="left:376px;top:108.2px;width:42px;height:21.6px;background:rgb(122,230,197);">7.65</div><div class="a dc" style="left:418px;top:108.2px;width:42px;height:21.6px;background:rgb(120,232,218);">4.94</div><div class="a dc" style="left:460px;top:108.2px;width:42px;height:21.6px;background:rgb(120,232,221);">4.25</div><div class="a dc" style="left:502px;top:108.2px;width:42px;height:21.6px;background:rgb(121,232,227);">2.75</div><div class="a dc" style="left:544px;top:108.2px;width:42px;height:21.6px;background:rgb(122,232,234);">1.00</div><div class="a hc" style="left:0.0px;top:129.9px;width:40.0px;height:21.6px;text-align:right;padding-right:3px">1250</div><div class="a dc" style="left:40px;top:129.9px;width:42px;height:21.6px;background:rgb(150,226,148);">16.00</div><div class="a dc" style="left:82px;top:129.9px;width:42px;height:21.6px;background:rgb(150,226,148);">16.00</div><div class="a dc" style="left:124px;top:129.9px;width:42px;height:21.6px;background:rgb(150,226,148);">16.00</div><div class="a dc" style="left:166px;top:129.9px;width:42px;height:21.6px;background:rgb(150,226,148);">16.00</div><div class="a dc" style="left:208px;top:129.9px;width:42px;height:21.6px;background:rgb(150,226,148);">16.00</div><div class="a dc" style="left:250px;top:129.9px;width:42px;height:21.6px;background:rgb(150,226,148);">16.00</div><div class="a dc" style="left:292px;top:129.9px;width:42px;height:21.6px;background:rgb(140,230,162);">13.00</div><div class="a dc" style="left:334px;top:129.9px;width:42px;height:21.6px;background:rgb(127,232,177);">10.42</div><div class="a dc" style="left:376px;top:129.9px;width:42px;height:21.6px;background:rgb(125,232,181);">9.83</div><div class="a dc" style="left:418px;top:129.9px;width:42px;height:21.6px;background:rgb(122,230,200);">7.25</div><div class="a dc" style="left:460px;top:129.9px;width:42px;height:21.6px;background:rgb(122,230,200);">7.25</div><div class="a dc" style="left:502px;top:129.9px;width:42px;height:21.6px;background:rgb(120,232,216);">5.25</div><div class="a dc" style="left:544px;top:129.9px;width:42px;height:21.6px;background:rgb(121,232,227);">2.75</div><div class="a hc" style="left:0.0px;top:151.5px;width:40.0px;height:21.6px;text-align:right;padding-right:3px">1500</div><div class="a dc" style="left:40px;top:151.5px;width:42px;height:21.6px;background:rgb(201,195,120);">21.83</div><div class="a dc" style="left:82px;top:151.5px;width:42px;height:21.6px;background:rgb(198,197,121);">21.43</div><div class="a dc" style="left:124px;top:151.5px;width:42px;height:21.6px;background:rgb(195,200,122);">21.03</div><div class="a dc" style="left:166px;top:151.5px;width:42px;height:21.6px;background:rgb(190,202,124);">20.63</div><div class="a dc" style="left:208px;top:151.5px;width:42px;height:21.6px;background:rgb(185,205,126);">20.23</div><div class="a dc" style="left:250px;top:151.5px;width:42px;height:21.6px;background:rgb(179,208,128);">19.83</div><div class="a dc" style="left:292px;top:151.5px;width:42px;height:21.6px;background:rgb(150,226,148);">15.97</div><div class="a dc" style="left:334px;top:151.5px;width:42px;height:21.6px;background:rgb(140,229,162);">13.03</div><div class="a dc" style="left:376px;top:151.5px;width:42px;height:21.6px;background:rgb(136,230,167);">12.09</div><div class="a dc" style="left:418px;top:151.5px;width:42px;height:21.6px;background:rgb(125,232,180);">10.00</div><div class="a dc" style="left:460px;top:151.5px;width:42px;height:21.6px;background:rgb(124,231,185);">9.25</div><div class="a dc" style="left:502px;top:151.5px;width:42px;height:21.6px;background:rgb(122,230,202);">7.00</div><div class="a dc" style="left:544px;top:151.5px;width:42px;height:21.6px;background:rgb(120,232,221);">4.25</div><div class="a hc" style="left:0.0px;top:173.2px;width:40.0px;height:21.6px;text-align:right;padding-right:3px">1750</div><div class="a dc" style="left:40px;top:173.2px;width:42px;height:21.6px;background:rgb(232,162,116);">27.67</div><div class="a dc" style="left:82px;top:173.2px;width:42px;height:21.6px;background:rgb(229,166,115);">26.87</div><div class="a dc" style="left:124px;top:173.2px;width:42px;height:21.6px;background:rgb(226,171,115);">26.07</div><div class="a dc" style="left:166px;top:173.2px;width:42px;height:21.6px;background:rgb(221,176,115);">25.27</div><div class="a dc" style="left:208px;top:173.2px;width:42px;height:21.6px;background:rgb(217,181,116);">24.47</div><div class="a dc" style="left:250px;top:173.2px;width:42px;height:21.6px;background:rgb(213,185,117);">23.67</div><div class="a dc" style="left:292px;top:173.2px;width:42px;height:21.6px;background:rgb(169,216,136);">18.94</div><div class="a dc" style="left:334px;top:173.2px;width:42px;height:21.6px;background:rgb(149,226,149);">15.69</div><div class="a dc" style="left:376px;top:173.2px;width:42px;height:21.6px;background:rgb(145,228,155);">14.44</div><div class="a dc" style="left:418px;top:173.2px;width:42px;height:21.6px;background:rgb(139,230,164);">12.75</div><div class="a dc" style="left:460px;top:173.2px;width:42px;height:21.6px;background:rgb(128,232,177);">10.50</div><div class="a dc" style="left:502px;top:173.2px;width:42px;height:21.6px;background:rgb(123,230,196);">7.75</div><div class="a dc" style="left:544px;top:173.2px;width:42px;height:21.6px;background:rgb(120,232,219);">4.75</div><div class="a hc" style="left:0.0px;top:194.8px;width:40.0px;height:21.6px;text-align:right;padding-right:3px">2000</div><div class="a dc" style="left:40px;top:194.8px;width:42px;height:21.6px;background:rgb(240,143,125);">33.50</div><div class="a dc" style="left:82px;top:194.8px;width:42px;height:21.6px;background:rgb(240,146,125);">32.30</div><div class="a dc" style="left:124px;top:194.8px;width:42px;height:21.6px;background:rgb(240,150,125);">31.10</div><div class="a dc" style="left:166px;top:194.8px;width:42px;height:21.6px;background:rgb(238,153,121);">29.90</div><div class="a dc" style="left:208px;top:194.8px;width:42px;height:21.6px;background:rgb(235,157,118);">28.70</div><div class="a dc" style="left:250px;top:194.8px;width:42px;height:21.6px;background:rgb(231,163,116);">27.50</div><div class="a dc" style="left:292px;top:194.8px;width:42px;height:21.6px;background:rgb(202,195,120);">21.91</div><div class="a dc" style="left:334px;top:194.8px;width:42px;height:21.6px;background:rgb(164,220,140);">18.34</div><div class="a dc" style="left:376px;top:194.8px;width:42px;height:21.6px;background:rgb(154,224,145);">16.78</div><div class="a dc" style="left:418px;top:194.8px;width:42px;height:21.6px;background:rgb(145,228,155);">14.50</div><div class="a dc" style="left:460px;top:194.8px;width:42px;height:21.6px;background:rgb(138,230,165);">12.50</div><div class="a dc" style="left:502px;top:194.8px;width:42px;height:21.6px;background:rgb(125,232,182);">9.75</div><div class="a dc" style="left:544px;top:194.8px;width:42px;height:21.6px;background:rgb(121,231,210);">6.00</div><div class="a hc" style="left:0.0px;top:216.5px;width:40.0px;height:21.6px;text-align:right;padding-right:3px">2250</div><div class="a dc" style="left:40px;top:216.5px;width:42px;height:21.6px;background:rgb(240,131,130);">36.75</div><div class="a dc" style="left:82px;top:216.5px;width:42px;height:21.6px;background:rgb(240,137,126);">35.25</div><div class="a dc" style="left:124px;top:216.5px;width:42px;height:21.6px;background:rgb(240,141,125);">34.00</div><div class="a dc" style="left:166px;top:216.5px;width:42px;height:21.6px;background:rgb(240,146,125);">32.50</div><div class="a dc" style="left:208px;top:216.5px;width:42px;height:21.6px;background:rgb(239,151,123);">30.50</div><div class="a dc" style="left:250px;top:216.5px;width:42px;height:21.6px;background:rgb(235,156,118);">28.75</div><div class="a dc" style="left:292px;top:216.5px;width:42px;height:21.6px;background:rgb(219,179,115);">24.88</div><div class="a dc" style="left:334px;top:216.5px;width:42px;height:21.6px;background:rgb(195,200,122);">21.00</div><div class="a dc" style="left:376px;top:216.5px;width:42px;height:21.6px;background:rgb(171,214,134);">19.13</div><div class="a dc" style="left:418px;top:216.5px;width:42px;height:21.6px;background:rgb(152,225,146);">16.50</div><div class="a dc" style="left:460px;top:216.5px;width:42px;height:21.6px;background:rgb(145,228,155);">14.50</div><div class="a dc" style="left:502px;top:216.5px;width:42px;height:21.6px;background:rgb(133,231,171);">11.50</div><div class="a dc" style="left:544px;top:216.5px;width:42px;height:21.6px;background:rgb(122,230,198);">7.50</div><div class="a hc" style="left:0.0px;top:238.1px;width:40.0px;height:21.6px;text-align:right;padding-right:3px">2500</div><div class="a dc" style="left:40px;top:238.1px;width:42px;height:21.6px;background:rgb(239,129,129);">39.75</div><div class="a dc" style="left:82px;top:238.1px;width:42px;height:21.6px;background:rgb(240,129,130);">38.25</div><div class="a dc" style="left:124px;top:238.1px;width:42px;height:21.6px;background:rgb(240,132,129);">36.50</div><div class="a dc" style="left:166px;top:238.1px;width:42px;height:21.6px;background:rgb(240,138,126);">35.00</div><div class="a dc" style="left:208px;top:238.1px;width:42px;height:21.6px;background:rgb(240,148,125);">31.75</div><div class="a dc" style="left:250px;top:238.1px;width:42px;height:21.6px;background:rgb(238,152,122);">30.00</div><div class="a dc" style="left:292px;top:238.1px;width:42px;height:21.6px;background:rgb(227,169,115);">26.35</div><div class="a dc" style="left:334px;top:238.1px;width:42px;height:21.6px;background:rgb(208,190,118);">22.71</div><div class="a dc" style="left:376px;top:238.1px;width:42px;height:21.6px;background:rgb(195,200,122);">21.06</div><div class="a dc" style="left:418px;top:238.1px;width:42px;height:21.6px;background:rgb(165,220,140);">18.50</div><div class="a dc" style="left:460px;top:238.1px;width:42px;height:21.6px;background:rgb(151,226,147);">16.25</div><div class="a dc" style="left:502px;top:238.1px;width:42px;height:21.6px;background:rgb(135,230,168);">12.00</div><div class="a dc" style="left:544px;top:238.1px;width:42px;height:21.6px;background:rgb(123,231,191);">8.44</div><div class="a hc" style="left:0.0px;top:259.8px;width:40.0px;height:21.6px;text-align:right;padding-right:3px">2750</div><div class="a dc" style="left:40px;top:259.8px;width:42px;height:21.6px;background:rgb(239,128,129);">41.00</div><div class="a dc" style="left:82px;top:259.8px;width:42px;height:21.6px;background:rgb(239,129,129);">39.75</div><div class="a dc" style="left:124px;top:259.8px;width:42px;height:21.6px;background:rgb(240,129,130);">38.25</div><div class="a dc" style="left:166px;top:259.8px;width:42px;height:21.6px;background:rgb(240,131,130);">36.75</div><div class="a dc" style="left:208px;top:259.8px;width:42px;height:21.6px;background:rgb(240,144,125);">33.00</div><div class="a dc" style="left:250px;top:259.8px;width:42px;height:21.6px;background:rgb(240,149,125);">31.33</div><div class="a dc" style="left:292px;top:259.8px;width:42px;height:21.6px;background:rgb(232,162,116);">27.61</div><div class="a dc" style="left:334px;top:259.8px;width:42px;height:21.6px;background:rgb(214,184,116);">23.90</div><div class="a dc" style="left:376px;top:259.8px;width:42px;height:21.6px;background:rgb(204,193,119);">22.18</div><div class="a dc" style="left:418px;top:259.8px;width:42px;height:21.6px;background:rgb(185,205,126);">20.25</div><div class="a dc" style="left:460px;top:259.8px;width:42px;height:21.6px;background:rgb(163,221,141);">18.25</div><div class="a dc" style="left:502px;top:259.8px;width:42px;height:21.6px;background:rgb(140,230,162);">13.00</div><div class="a dc" style="left:544px;top:259.8px;width:42px;height:21.6px;background:rgb(124,232,185);">9.38</div><div class="a hc" style="left:0.0px;top:281.4px;width:40.0px;height:21.6px;text-align:right;padding-right:3px">3000</div><div class="a dc" style="left:40px;top:281.4px;width:42px;height:21.6px;background:rgb(239,128,129);">41.50</div><div class="a dc" style="left:82px;top:281.4px;width:42px;height:21.6px;background:rgb(239,128,129);">40.00</div><div class="a dc" style="left:124px;top:281.4px;width:42px;height:21.6px;background:rgb(240,129,130);">38.50</div><div class="a dc" style="left:166px;top:281.4px;width:42px;height:21.6px;background:rgb(240,130,130);">37.25</div><div class="a dc" style="left:208px;top:281.4px;width:42px;height:21.6px;background:rgb(240,140,125);">34.50</div><div class="a dc" style="left:250px;top:281.4px;width:42px;height:21.6px;background:rgb(240,145,125);">32.67</div><div class="a dc" style="left:292px;top:281.4px;width:42px;height:21.6px;background:rgb(236,156,118);">28.88</div><div class="a dc" style="left:334px;top:281.4px;width:42px;height:21.6px;background:rgb(220,177,115);">25.08</div><div class="a dc" style="left:376px;top:281.4px;width:42px;height:21.6px;background:rgb(211,187,117);">23.29</div><div class="a dc" style="left:418px;top:281.4px;width:42px;height:21.6px;background:rgb(201,196,120);">21.75</div><div class="a dc" style="left:460px;top:281.4px;width:42px;height:21.6px;background:rgb(175,210,130);">19.50</div><div class="a dc" style="left:502px;top:281.4px;width:42px;height:21.6px;background:rgb(148,227,152);">15.25</div><div class="a dc" style="left:544px;top:281.4px;width:42px;height:21.6px;background:rgb(127,232,178);">10.31</div><div class="a hc" style="left:0.0px;top:303.1px;width:40.0px;height:21.6px;text-align:right;padding-right:3px">3500</div><div class="a dc" style="left:40px;top:303.1px;width:42px;height:21.6px;background:rgb(239,127,129);">42.25</div><div class="a dc" style="left:82px;top:303.1px;width:42px;height:21.6px;background:rgb(239,128,129);">40.75</div><div class="a dc" style="left:124px;top:303.1px;width:42px;height:21.6px;background:rgb(240,129,130);">39.25</div><div class="a dc" style="left:166px;top:303.1px;width:42px;height:21.6px;background:rgb(240,130,130);">37.75</div><div class="a dc" style="left:208px;top:303.1px;width:42px;height:21.6px;background:rgb(240,135,128);">35.75</div><div class="a dc" style="left:250px;top:303.1px;width:42px;height:21.6px;background:rgb(240,143,125);">33.52</div><div class="a dc" style="left:292px;top:303.1px;width:42px;height:21.6px;background:rgb(238,153,121);">29.77</div><div class="a dc" style="left:334px;top:303.1px;width:42px;height:21.6px;background:rgb(225,171,115);">26.01</div><div class="a dc" style="left:376px;top:303.1px;width:42px;height:21.6px;background:rgb(216,182,116);">24.26</div><div class="a dc" style="left:418px;top:303.1px;width:42px;height:21.6px;background:rgb(206,191,118);">22.50</div><div class="a dc" style="left:460px;top:303.1px;width:42px;height:21.6px;background:rgb(185,205,126);">20.25</div><div class="a dc" style="left:502px;top:303.1px;width:42px;height:21.6px;background:rgb(150,226,148);">16.00</div><div class="a dc" style="left:544px;top:303.1px;width:42px;height:21.6px;background:rgb(132,231,172);">11.25</div><div class="a hc" style="left:0.0px;top:324.8px;width:40.0px;height:21.6px;text-align:right;padding-right:3px">4000</div><div class="a dc" style="left:40px;top:324.8px;width:42px;height:21.6px;background:rgb(239,127,129);">42.75</div><div class="a dc" style="left:82px;top:324.8px;width:42px;height:21.6px;background:rgb(239,128,129);">41.25</div><div class="a dc" style="left:124px;top:324.8px;width:42px;height:21.6px;background:rgb(239,129,129);">39.75</div><div class="a dc" style="left:166px;top:324.8px;width:42px;height:21.6px;background:rgb(240,129,130);">38.50</div><div class="a dc" style="left:208px;top:324.8px;width:42px;height:21.6px;background:rgb(240,130,130);">37.00</div><div class="a dc" style="left:250px;top:324.8px;width:42px;height:21.6px;background:rgb(240,140,125);">34.38</div><div class="a dc" style="left:292px;top:324.8px;width:42px;height:21.6px;background:rgb(239,151,124);">30.66</div><div class="a dc" style="left:334px;top:324.8px;width:42px;height:21.6px;background:rgb(229,166,116);">26.94</div><div class="a dc" style="left:376px;top:324.8px;width:42px;height:21.6px;background:rgb(221,177,115);">25.22</div><div class="a dc" style="left:418px;top:324.8px;width:42px;height:21.6px;background:rgb(211,187,117);">23.25</div><div class="a dc" style="left:460px;top:324.8px;width:42px;height:21.6px;background:rgb(195,200,122);">21.00</div><div class="a dc" style="left:502px;top:324.8px;width:42px;height:21.6px;background:rgb(154,224,145);">16.75</div><div class="a dc" style="left:544px;top:324.8px;width:42px;height:21.6px;background:rgb(137,230,166);">12.25</div><div class="a hc" style="left:0.0px;top:346.4px;width:40.0px;height:21.6px;text-align:right;padding-right:3px">4500</div><div class="a dc" style="left:40px;top:346.4px;width:42px;height:21.6px;background:rgb(239,127,129);">43.25</div><div class="a dc" style="left:82px;top:346.4px;width:42px;height:21.6px;background:rgb(239,128,129);">42.00</div><div class="a dc" style="left:124px;top:346.4px;width:42px;height:21.6px;background:rgb(239,128,129);">40.50</div><div class="a dc" style="left:166px;top:346.4px;width:42px;height:21.6px;background:rgb(240,129,130);">39.00</div><div class="a dc" style="left:208px;top:346.4px;width:42px;height:21.6px;background:rgb(240,130,130);">37.50</div><div class="a dc" style="left:250px;top:346.4px;width:42px;height:21.6px;background:rgb(240,137,126);">35.23</div><div class="a dc" style="left:292px;top:346.4px;width:42px;height:21.6px;background:rgb(240,148,125);">31.55</div><div class="a dc" style="left:334px;top:346.4px;width:42px;height:21.6px;background:rgb(232,161,117);">27.86</div><div class="a dc" style="left:376px;top:346.4px;width:42px;height:21.6px;background:rgb(226,170,115);">26.18</div><div class="a dc" style="left:418px;top:346.4px;width:42px;height:21.6px;background:rgb(215,183,116);">24.00</div><div class="a dc" style="left:460px;top:346.4px;width:42px;height:21.6px;background:rgb(201,196,120);">21.75</div><div class="a dc" style="left:502px;top:346.4px;width:42px;height:21.6px;background:rgb(157,223,143);">17.25</div><div class="a dc" style="left:544px;top:346.4px;width:42px;height:21.6px;background:rgb(140,230,162);">13.00</div><div class="a hc" style="left:0.0px;top:368.0px;width:40.0px;height:21.6px;text-align:right;padding-right:3px">5000</div><div class="a dc" style="left:40px;top:368.0px;width:42px;height:21.6px;background:rgb(239,126,129);">44.00</div><div class="a dc" style="left:82px;top:368.0px;width:42px;height:21.6px;background:rgb(239,127,129);">42.50</div><div class="a dc" style="left:124px;top:368.0px;width:42px;height:21.6px;background:rgb(239,128,129);">41.00</div><div class="a dc" style="left:166px;top:368.0px;width:42px;height:21.6px;background:rgb(239,129,129);">39.75</div><div class="a dc" style="left:208px;top:368.0px;width:42px;height:21.6px;background:rgb(240,129,130);">38.25</div><div class="a dc" style="left:250px;top:368.0px;width:42px;height:21.6px;background:rgb(240,134,128);">36.08</div><div class="a dc" style="left:292px;top:368.0px;width:42px;height:21.6px;background:rgb(240,146,125);">32.44</div><div class="a dc" style="left:334px;top:368.0px;width:42px;height:21.6px;background:rgb(235,156,118);">28.79</div><div class="a dc" style="left:376px;top:368.0px;width:42px;height:21.6px;background:rgb(230,165,116);">27.15</div><div class="a dc" style="left:418px;top:368.0px;width:42px;height:21.6px;background:rgb(219,179,115);">24.75</div><div class="a dc" style="left:460px;top:368.0px;width:42px;height:21.6px;background:rgb(206,191,118);">22.50</div><div class="a dc" style="left:502px;top:368.0px;width:42px;height:21.6px;background:rgb(162,221,141);">18.00</div><div class="a dc" style="left:544px;top:368.0px;width:42px;height:21.6px;background:rgb(142,229,160);">13.50</div><div class="a hc" style="left:0.0px;top:389.7px;width:40.0px;height:21.6px;text-align:right;padding-right:3px">5500</div><div class="a dc" style="left:40px;top:389.7px;width:42px;height:21.6px;background:rgb(238,126,128);">44.50</div><div class="a dc" style="left:82px;top:389.7px;width:42px;height:21.6px;background:rgb(239,127,129);">43.25</div><div class="a dc" style="left:124px;top:389.7px;width:42px;height:21.6px;background:rgb(239,128,129);">41.75</div><div class="a dc" style="left:166px;top:389.7px;width:42px;height:21.6px;background:rgb(239,128,129);">40.25</div><div class="a dc" style="left:208px;top:389.7px;width:42px;height:21.6px;background:rgb(240,129,130);">38.75</div><div class="a dc" style="left:250px;top:389.7px;width:42px;height:21.6px;background:rgb(240,130,130);">36.94</div><div class="a dc" style="left:292px;top:389.7px;width:42px;height:21.6px;background:rgb(240,143,125);">33.33</div><div class="a dc" style="left:334px;top:389.7px;width:42px;height:21.6px;background:rgb(237,153,121);">29.72</div><div class="a dc" style="left:376px;top:389.7px;width:42px;height:21.6px;background:rgb(233,160,117);">28.11</div><div class="a dc" style="left:418px;top:389.7px;width:42px;height:21.6px;background:rgb(223,175,115);">25.50</div><div class="a dc" style="left:460px;top:389.7px;width:42px;height:21.6px;background:rgb(210,188,118);">23.00</div><div class="a dc" style="left:502px;top:389.7px;width:42px;height:21.6px;background:rgb(165,220,140);">18.50</div><div class="a dc" style="left:544px;top:389.7px;width:42px;height:21.6px;background:rgb(143,228,158);">14.00</div><div class="a hc" style="left:0.0px;top:411.3px;width:40.0px;height:21.6px;text-align:right;padding-right:3px">6000</div><div class="a dc" style="left:40px;top:411.3px;width:42px;height:21.6px;background:rgb(238,126,128);">45.25</div><div class="a dc" style="left:82px;top:411.3px;width:42px;height:21.6px;background:rgb(239,127,129);">43.75</div><div class="a dc" style="left:124px;top:411.3px;width:42px;height:21.6px;background:rgb(239,127,129);">42.25</div><div class="a dc" style="left:166px;top:411.3px;width:42px;height:21.6px;background:rgb(239,128,129);">41.00</div><div class="a dc" style="left:208px;top:411.3px;width:42px;height:21.6px;background:rgb(240,129,130);">39.50</div><div class="a dc" style="left:250px;top:411.3px;width:42px;height:21.6px;background:rgb(240,130,130);">37.79</div><div class="a dc" style="left:292px;top:411.3px;width:42px;height:21.6px;background:rgb(240,141,125);">34.22</div><div class="a dc" style="left:334px;top:411.3px;width:42px;height:21.6px;background:rgb(239,151,124);">30.65</div><div class="a dc" style="left:376px;top:411.3px;width:42px;height:21.6px;background:rgb(236,155,118);">29.07</div><div class="a dc" style="left:418px;top:411.3px;width:42px;height:21.6px;background:rgb(228,168,115);">26.50</div><div class="a dc" style="left:460px;top:411.3px;width:42px;height:21.6px;background:rgb(213,185,117);">23.75</div><div class="a dc" style="left:502px;top:411.3px;width:42px;height:21.6px;background:rgb(172,212,132);">19.25</div><div class="a dc" style="left:544px;top:411.3px;width:42px;height:21.6px;background:rgb(145,228,155);">14.50</div><div class="a hc" style="left:0.0px;top:433.0px;width:40.0px;height:21.6px;text-align:right;padding-right:3px">7000</div><div class="a dc" style="left:40px;top:433.0px;width:42px;height:21.6px;background:rgb(238,126,128);">45.75</div><div class="a dc" style="left:82px;top:433.0px;width:42px;height:21.6px;background:rgb(239,126,129);">44.25</div><div class="a dc" style="left:124px;top:433.0px;width:42px;height:21.6px;background:rgb(239,127,129);">43.00</div><div class="a dc" style="left:166px;top:433.0px;width:42px;height:21.6px;background:rgb(239,128,129);">41.50</div><div class="a dc" style="left:208px;top:433.0px;width:42px;height:21.6px;background:rgb(239,128,129);">40.00</div><div class="a dc" style="left:250px;top:433.0px;width:42px;height:21.6px;background:rgb(240,129,130);">38.65</div><div class="a dc" style="left:292px;top:433.0px;width:42px;height:21.6px;background:rgb(240,138,126);">35.11</div><div class="a dc" style="left:334px;top:433.0px;width:42px;height:21.6px;background:rgb(240,148,125);">31.57</div><div class="a dc" style="left:376px;top:433.0px;width:42px;height:21.6px;background:rgb(238,152,122);">30.04</div><div class="a dc" style="left:418px;top:433.0px;width:42px;height:21.6px;background:rgb(230,164,116);">27.25</div><div class="a dc" style="left:460px;top:433.0px;width:42px;height:21.6px;background:rgb(217,181,116);">24.50</div><div class="a dc" style="left:502px;top:433.0px;width:42px;height:21.6px;background:rgb(182,207,127);">20.00</div><div class="a dc" style="left:544px;top:433.0px;width:42px;height:21.6px;background:rgb(145,228,155);">14.50</div><div class="a hc" style="left:0.0px;top:454.6px;width:40.0px;height:21.6px;text-align:right;padding-right:3px">8000</div><div class="a dc" style="left:40px;top:454.6px;width:42px;height:21.6px;background:rgb(238,125,128);">46.25</div><div class="a dc" style="left:82px;top:454.6px;width:42px;height:21.6px;background:rgb(238,126,128);">45.00</div><div class="a dc" style="left:124px;top:454.6px;width:42px;height:21.6px;background:rgb(239,127,129);">43.50</div><div class="a dc" style="left:166px;top:454.6px;width:42px;height:21.6px;background:rgb(239,128,129);">42.00</div><div class="a dc" style="left:208px;top:454.6px;width:42px;height:21.6px;background:rgb(239,128,129);">40.75</div><div class="a dc" style="left:250px;top:454.6px;width:42px;height:21.6px;background:rgb(240,129,130);">39.50</div><div class="a dc" style="left:292px;top:454.6px;width:42px;height:21.6px;background:rgb(240,134,128);">36.00</div><div class="a dc" style="left:334px;top:454.6px;width:42px;height:21.6px;background:rgb(240,146,125);">32.50</div><div class="a dc" style="left:376px;top:454.6px;width:42px;height:21.6px;background:rgb(240,150,125);">31.00</div><div class="a dc" style="left:418px;top:454.6px;width:42px;height:21.6px;background:rgb(233,160,117);">28.00</div><div class="a dc" style="left:460px;top:454.6px;width:42px;height:21.6px;background:rgb(221,176,115);">25.25</div><div class="a dc" style="left:502px;top:454.6px;width:42px;height:21.6px;background:rgb(188,203,125);">20.50</div><div class="a dc" style="left:544px;top:454.6px;width:42px;height:21.6px;background:rgb(145,228,155);">14.50</div></div><div class="a" style="left:727px;top:0;width:6px;height:700px;border-left:1px solid #aca899;border-right:1px solid #fff"></div><div class="a" style="left:736px;top:2px;width:27px;height:24px;border:1px solid #c0bdb0;border-radius:3px;background:#e3e0d2;font-size:14px;text-align:center;line-height:25px">2d</div><div class="a" style="left:765px;top:2px;width:26px;height:24px;border-radius:3px;background:#f0eee4;font-size:14px;text-align:center;line-height:25px">3d</div><svg class="a" style="left:734px;top:0px" width="800" height="640" font-family="Liberation Sans" font-size="13.5"><rect x="46.0" y="52.5" width="730" height="565.0" fill="#fff"/><path d="M46 92.5H776" stroke="#181818" stroke-width="1.2"/><text x="43" y="96.5" text-anchor="end" fill="#202020">45.00</text><path d="M46 144.5H776" stroke="#181818" stroke-width="1.2"/><text x="43" y="149.1" text-anchor="end" fill="#202020">40.00</text><path d="M46 197.5H776" stroke="#181818" stroke-width="1.2"/><text x="43" y="201.7" text-anchor="end" fill="#202020">35.00</text><path d="M46 249.5H776" stroke="#181818" stroke-width="1.2"/><text x="43" y="254.3" text-anchor="end" fill="#202020">30.00</text><path d="M46 302.5H776" stroke="#181818" stroke-width="1.2"/><text x="43" y="306.9" text-anchor="end" fill="#202020">25.00</text><path d="M46 354.5H776" stroke="#181818" stroke-width="1.2"/><text x="43" y="359.5" text-anchor="end" fill="#202020">20.00</text><path d="M46 407.5H776" stroke="#181818" stroke-width="1.2"/><text x="43" y="412.1" text-anchor="end" fill="#202020">15.00</text><path d="M46 460.5H776" stroke="#181818" stroke-width="1.2"/><text x="43" y="464.7" text-anchor="end" fill="#202020">10.00</text><path d="M46 512.5H776" stroke="#181818" stroke-width="1.2"/><text x="43" y="517.3" text-anchor="end" fill="#202020">5.00</text><path d="M46 565.5H776" stroke="#181818" stroke-width="1.2"/><text x="43" y="569.9" text-anchor="end" fill="#202020">0.00</text><text x="43" y="622.5" text-anchor="end" fill="#202020">-5.00</text><path d="M148.5 52.5V617.5" stroke="#181818" stroke-width="1.2"/><text x="147.5" y="630" text-anchor="middle" fill="#202020">1800</text><path d="M249.5 52.5V617.5" stroke="#181818" stroke-width="1.2"/><text x="249.0" y="630" text-anchor="middle" fill="#202020">2800</text><path d="M350.5 52.5V617.5" stroke="#181818" stroke-width="1.2"/><text x="350.5" y="630" text-anchor="middle" fill="#202020">3800</text><path d="M452.5 52.5V617.5" stroke="#181818" stroke-width="1.2"/><text x="452.0" y="630" text-anchor="middle" fill="#202020">4800</text><path d="M554.5 52.5V617.5" stroke="#181818" stroke-width="1.2"/><text x="553.5" y="630" text-anchor="middle" fill="#202020">5800</text><path d="M655.5 52.5V617.5" stroke="#181818" stroke-width="1.2"/><text x="655.0" y="630" text-anchor="middle" fill="#202020">6800</text><path d="M756.5 52.5V617.5" stroke="#181818" stroke-width="1.2"/><text x="756.5" y="630" text-anchor="middle" fill="#202020">7800</text><path d="M46 52.5V617.5H776" stroke="#101010" stroke-width="2.5" fill="none"/><path d="M46 52.5H776" stroke="#101010" stroke-width="1.5" fill="none"/><text x="411" y="646" text-anchor="middle" fill="#202020">RPM</text><rect x="5" y="295" width="14" height="78" fill="#ECE9D8"/><text transform="translate(17.5,334) rotate(-90)" text-anchor="middle" fill="#202020" font-size="14" letter-spacing="0.3">Advance (&#176;)</text><path d="M46.0 396.6 L56.2 396.6 L61.2 396.6 L66.3 396.6 L91.7 396.6 L117.0 335.2 L142.4 273.8 L167.8 212.5 L193.2 178.3 L218.5 146.7 L243.9 133.6 L269.3 128.3 L320.0 120.4 L370.8 115.2 L421.5 109.9 L472.3 102.0 L523.0 96.8 L573.8 88.9 L675.3 83.6 L776.8 78.4" stroke="#e010e0" stroke-width="1.1" fill="none"/><rect x="42.5" y="393.1" width="7" height="7" fill="#e010e0"/><rect x="44.5" y="395.6" width="3" height="2" fill="#fff" fill-opacity="0.6"/><rect x="52.7" y="393.1" width="7" height="7" fill="#e010e0"/><rect x="54.7" y="395.6" width="3" height="2" fill="#fff" fill-opacity="0.6"/><rect x="57.7" y="393.1" width="7" height="7" fill="#e010e0"/><rect x="59.7" y="395.6" width="3" height="2" fill="#fff" fill-opacity="0.6"/><rect x="62.8" y="393.1" width="7" height="7" fill="#e010e0"/><rect x="64.8" y="395.6" width="3" height="2" fill="#fff" fill-opacity="0.6"/><rect x="88.2" y="393.1" width="7" height="7" fill="#e010e0"/><rect x="90.2" y="395.6" width="3" height="2" fill="#fff" fill-opacity="0.6"/><rect x="113.5" y="331.7" width="7" height="7" fill="#e010e0"/><rect x="115.5" y="334.2" width="3" height="2" fill="#fff" fill-opacity="0.6"/><rect x="138.9" y="270.3" width="7" height="7" fill="#e010e0"/><rect x="140.9" y="272.8" width="3" height="2" fill="#fff" fill-opacity="0.6"/><rect x="164.3" y="209.0" width="7" height="7" fill="#e010e0"/><rect x="166.3" y="211.5" width="3" height="2" fill="#fff" fill-opacity="0.6"/><rect x="189.7" y="174.8" width="7" height="7" fill="#e010e0"/><rect x="191.7" y="177.3" width="3" height="2" fill="#fff" fill-opacity="0.6"/><rect x="215.0" y="143.2" width="7" height="7" fill="#e010e0"/><rect x="217.0" y="145.7" width="3" height="2" fill="#fff" fill-opacity="0.6"/><rect x="240.4" y="130.1" width="7" height="7" fill="#e010e0"/><rect x="242.4" y="132.6" width="3" height="2" fill="#fff" fill-opacity="0.6"/><rect x="265.8" y="124.8" width="7" height="7" fill="#e010e0"/><rect x="267.8" y="127.3" width="3" height="2" fill="#fff" fill-opacity="0.6"/><rect x="316.5" y="116.9" width="7" height="7" fill="#e010e0"/><rect x="318.5" y="119.4" width="3" height="2" fill="#fff" fill-opacity="0.6"/><rect x="367.3" y="111.7" width="7" height="7" fill="#e010e0"/><rect x="369.3" y="114.2" width="3" height="2" fill="#fff" fill-opacity="0.6"/><rect x="418.0" y="106.4" width="7" height="7" fill="#e010e0"/><rect x="420.0" y="108.9" width="3" height="2" fill="#fff" fill-opacity="0.6"/><rect x="468.8" y="98.5" width="7" height="7" fill="#e010e0"/><rect x="470.8" y="101.0" width="3" height="2" fill="#fff" fill-opacity="0.6"/><rect x="519.5" y="93.3" width="7" height="7" fill="#e010e0"/><rect x="521.5" y="95.8" width="3" height="2" fill="#fff" fill-opacity="0.6"/><rect x="570.3" y="85.4" width="7" height="7" fill="#e010e0"/><rect x="572.3" y="87.9" width="3" height="2" fill="#fff" fill-opacity="0.6"/><rect x="671.8" y="80.1" width="7" height="7" fill="#e010e0"/><rect x="673.8" y="82.6" width="3" height="2" fill="#fff" fill-opacity="0.6"/><rect x="773.3" y="74.9" width="7" height="7" fill="#e010e0"/><rect x="775.3" y="77.4" width="3" height="2" fill="#fff" fill-opacity="0.6"/><path d="M46.0 396.6 L56.2 396.6 L61.2 396.6 L66.3 396.6 L91.7 396.6 L117.0 339.5 L142.4 282.2 L167.8 225.1 L193.2 194.1 L218.5 162.5 L243.9 146.7 L269.3 144.1 L320.0 136.2 L370.8 130.9 L421.5 123.1 L472.3 117.8 L523.0 109.9 L573.8 104.6 L675.3 99.4 L776.8 91.5" stroke="#5010c0" stroke-width="1.1" fill="none"/><rect x="42.5" y="393.1" width="7" height="7" fill="#5010c0"/><rect x="44.5" y="395.6" width="3" height="2" fill="#fff" fill-opacity="0.6"/><rect x="52.7" y="393.1" width="7" height="7" fill="#5010c0"/><rect x="54.7" y="395.6" width="3" height="2" fill="#fff" fill-opacity="0.6"/><rect x="57.7" y="393.1" width="7" height="7" fill="#5010c0"/><rect x="59.7" y="395.6" width="3" height="2" fill="#fff" fill-opacity="0.6"/><rect x="62.8" y="393.1" width="7" height="7" fill="#5010c0"/><rect x="64.8" y="395.6" width="3" height="2" fill="#fff" fill-opacity="0.6"/><rect x="88.2" y="393.1" width="7" height="7" fill="#5010c0"/><rect x="90.2" y="395.6" width="3" height="2" fill="#fff" fill-opacity="0.6"/><rect x="113.5" y="336.0" width="7" height="7" fill="#5010c0"/><rect x="115.5" y="338.5" width="3" height="2" fill="#fff" fill-opacity="0.6"/><rect x="138.9" y="278.7" width="7" height="7" fill="#5010c0"/><rect x="140.9" y="281.2" width="3" height="2" fill="#fff" fill-opacity="0.6"/><rect x="164.3" y="221.6" width="7" height="7" fill="#5010c0"/><rect x="166.3" y="224.1" width="3" height="2" fill="#fff" fill-opacity="0.6"/><rect x="189.7" y="190.6" width="7" height="7" fill="#5010c0"/><rect x="191.7" y="193.1" width="3" height="2" fill="#fff" fill-opacity="0.6"/><rect x="215.0" y="159.0" width="7" height="7" fill="#5010c0"/><rect x="217.0" y="161.5" width="3" height="2" fill="#fff" fill-opacity="0.6"/><rect x="240.4" y="143.2" width="7" height="7" fill="#5010c0"/><rect x="242.4" y="145.7" width="3" height="2" fill="#fff" fill-opacity="0.6"/><rect x="265.8" y="140.6" width="7" height="7" fill="#5010c0"/><rect x="267.8" y="143.1" width="3" height="2" fill="#fff" fill-opacity="0.6"/><rect x="316.5" y="132.7" width="7" height="7" fill="#5010c0"/><rect x="318.5" y="135.2" width="3" height="2" fill="#fff" fill-opacity="0.6"/><rect x="367.3" y="127.4" width="7" height="7" fill="#5010c0"/><rect x="369.3" y="129.9" width="3" height="2" fill="#fff" fill-opacity="0.6"/><rect x="418.0" y="119.6" width="7" height="7" fill="#5010c0"/><rect x="420.0" y="122.1" width="3" height="2" fill="#fff" fill-opacity="0.6"/><rect x="468.8" y="114.3" width="7" height="7" fill="#5010c0"/><rect x="470.8" y="116.8" width="3" height="2" fill="#fff" fill-opacity="0.6"/><rect x="519.5" y="106.4" width="7" height="7" fill="#5010c0"/><rect x="521.5" y="108.9" width="3" height="2" fill="#fff" fill-opacity="0.6"/><rect x="570.3" y="101.1" width="7" height="7" fill="#5010c0"/><rect x="572.3" y="103.6" width="3" height="2" fill="#fff" fill-opacity="0.6"/><rect x="671.8" y="95.9" width="7" height="7" fill="#5010c0"/><rect x="673.8" y="98.4" width="3" height="2" fill="#fff" fill-opacity="0.6"/><rect x="773.3" y="88.0" width="7" height="7" fill="#5010c0"/><rect x="775.3" y="90.5" width="3" height="2" fill="#fff" fill-opacity="0.6"/><path d="M46.0 396.6 L56.2 396.6 L61.2 396.6 L66.3 396.6 L91.7 396.6 L117.0 343.7 L142.4 290.6 L167.8 237.7 L193.2 207.2 L218.5 180.9 L243.9 162.5 L269.3 159.9 L320.0 152.0 L370.8 146.7 L421.5 138.8 L472.3 133.6 L523.0 125.7 L573.8 120.4 L675.3 112.5 L776.8 107.3" stroke="#1010d0" stroke-width="1.1" fill="none"/><rect x="42.5" y="393.1" width="7" height="7" fill="#1010d0"/><rect x="44.5" y="395.6" width="3" height="2" fill="#fff" fill-opacity="0.6"/><rect x="52.7" y="393.1" width="7" height="7" fill="#1010d0"/><rect x="54.7" y="395.6" width="3" height="2" fill="#fff" fill-opacity="0.6"/><rect x="57.7" y="393.1" width="7" height="7" fill="#1010d0"/><rect x="59.7" y="395.6" width="3" height="2" fill="#fff" fill-opacity="0.6"/><rect x="62.8" y="393.1" width="7" height="7" fill="#1010d0"/><rect x="64.8" y="395.6" width="3" height="2" fill="#fff" fill-opacity="0.6"/><rect x="88.2" y="393.1" width="7" height="7" fill="#1010d0"/><rect x="90.2" y="395.6" width="3" height="2" fill="#fff" fill-opacity="0.6"/><rect x="113.5" y="340.2" width="7" height="7" fill="#1010d0"/><rect x="115.5" y="342.7" width="3" height="2" fill="#fff" fill-opacity="0.6"/><rect x="138.9" y="287.1" width="7" height="7" fill="#1010d0"/><rect x="140.9" y="289.6" width="3" height="2" fill="#fff" fill-opacity="0.6"/><rect x="164.3" y="234.2" width="7" height="7" fill="#1010d0"/><rect x="166.3" y="236.7" width="3" height="2" fill="#fff" fill-opacity="0.6"/><rect x="189.7" y="203.7" width="7" height="7" fill="#1010d0"/><rect x="191.7" y="206.2" width="3" height="2" fill="#fff" fill-opacity="0.6"/><rect x="215.0" y="177.4" width="7" height="7" fill="#1010d0"/><rect x="217.0" y="179.9" width="3" height="2" fill="#fff" fill-opacity="0.6"/><rect x="240.4" y="159.0" width="7" height="7" fill="#1010d0"/><rect x="242.4" y="161.5" width="3" height="2" fill="#fff" fill-opacity="0.6"/><rect x="265.8" y="156.4" width="7" height="7" fill="#1010d0"/><rect x="267.8" y="158.9" width="3" height="2" fill="#fff" fill-opacity="0.6"/><rect x="316.5" y="148.5" width="7" height="7" fill="#1010d0"/><rect x="318.5" y="151.0" width="3" height="2" fill="#fff" fill-opacity="0.6"/><rect x="367.3" y="143.2" width="7" height="7" fill="#1010d0"/><rect x="369.3" y="145.7" width="3" height="2" fill="#fff" fill-opacity="0.6"/><rect x="418.0" y="135.3" width="7" height="7" fill="#1010d0"/><rect x="420.0" y="137.8" width="3" height="2" fill="#fff" fill-opacity="0.6"/><rect x="468.8" y="130.1" width="7" height="7" fill="#1010d0"/><rect x="470.8" y="132.6" width="3" height="2" fill="#fff" fill-opacity="0.6"/><rect x="519.5" y="122.2" width="7" height="7" fill="#1010d0"/><rect x="521.5" y="124.7" width="3" height="2" fill="#fff" fill-opacity="0.6"/><rect x="570.3" y="116.9" width="7" height="7" fill="#1010d0"/><rect x="572.3" y="119.4" width="3" height="2" fill="#fff" fill-opacity="0.6"/><rect x="671.8" y="109.0" width="7" height="7" fill="#1010d0"/><rect x="673.8" y="111.5" width="3" height="2" fill="#fff" fill-opacity="0.6"/><rect x="773.3" y="103.8" width="7" height="7" fill="#1010d0"/><rect x="775.3" y="106.3" width="3" height="2" fill="#fff" fill-opacity="0.6"/><path d="M46.0 396.6 L56.2 396.6 L61.2 396.6 L66.3 396.6 L91.7 396.6 L117.0 347.9 L142.4 299.1 L167.8 250.4 L193.2 223.0 L218.5 196.7 L243.9 178.3 L269.3 173.0 L320.0 167.8 L370.8 159.9 L421.5 154.6 L472.3 146.7 L523.0 141.5 L573.8 133.6 L675.3 128.3 L776.8 123.1" stroke="#1878a8" stroke-width="1.1" fill="none"/><rect x="42.5" y="393.1" width="7" height="7" fill="#1878a8"/><rect x="44.5" y="395.6" width="3" height="2" fill="#fff" fill-opacity="0.6"/><rect x="52.7" y="393.1" width="7" height="7" fill="#1878a8"/><rect x="54.7" y="395.6" width="3" height="2" fill="#fff" fill-opacity="0.6"/><rect x="57.7" y="393.1" width="7" height="7" fill="#1878a8"/><rect x="59.7" y="395.6" width="3" height="2" fill="#fff" fill-opacity="0.6"/><rect x="62.8" y="393.1" width="7" height="7" fill="#1878a8"/><rect x="64.8" y="395.6" width="3" height="2" fill="#fff" fill-opacity="0.6"/><rect x="88.2" y="393.1" width="7" height="7" fill="#1878a8"/><rect x="90.2" y="395.6" width="3" height="2" fill="#fff" fill-opacity="0.6"/><rect x="113.5" y="344.4" width="7" height="7" fill="#1878a8"/><rect x="115.5" y="346.9" width="3" height="2" fill="#fff" fill-opacity="0.6"/><rect x="138.9" y="295.6" width="7" height="7" fill="#1878a8"/><rect x="140.9" y="298.1" width="3" height="2" fill="#fff" fill-opacity="0.6"/><rect x="164.3" y="246.9" width="7" height="7" fill="#1878a8"/><rect x="166.3" y="249.4" width="3" height="2" fill="#fff" fill-opacity="0.6"/><rect x="189.7" y="219.5" width="7" height="7" fill="#1878a8"/><rect x="191.7" y="222.0" width="3" height="2" fill="#fff" fill-opacity="0.6"/><rect x="215.0" y="193.2" width="7" height="7" fill="#1878a8"/><rect x="217.0" y="195.7" width="3" height="2" fill="#fff" fill-opacity="0.6"/><rect x="240.4" y="174.8" width="7" height="7" fill="#1878a8"/><rect x="242.4" y="177.3" width="3" height="2" fill="#fff" fill-opacity="0.6"/><rect x="265.8" y="169.5" width="7" height="7" fill="#1878a8"/><rect x="267.8" y="172.0" width="3" height="2" fill="#fff" fill-opacity="0.6"/><rect x="316.5" y="164.3" width="7" height="7" fill="#1878a8"/><rect x="318.5" y="166.8" width="3" height="2" fill="#fff" fill-opacity="0.6"/><rect x="367.3" y="156.4" width="7" height="7" fill="#1878a8"/><rect x="369.3" y="158.9" width="3" height="2" fill="#fff" fill-opacity="0.6"/><rect x="418.0" y="151.1" width="7" height="7" fill="#1878a8"/><rect x="420.0" y="153.6" width="3" height="2" fill="#fff" fill-opacity="0.6"/><rect x="468.8" y="143.2" width="7" height="7" fill="#1878a8"/><rect x="470.8" y="145.7" width="3" height="2" fill="#fff" fill-opacity="0.6"/><rect x="519.5" y="138.0" width="7" height="7" fill="#1878a8"/><rect x="521.5" y="140.5" width="3" height="2" fill="#fff" fill-opacity="0.6"/><rect x="570.3" y="130.1" width="7" height="7" fill="#1878a8"/><rect x="572.3" y="132.6" width="3" height="2" fill="#fff" fill-opacity="0.6"/><rect x="671.8" y="124.8" width="7" height="7" fill="#1878a8"/><rect x="673.8" y="127.3" width="3" height="2" fill="#fff" fill-opacity="0.6"/><rect x="773.3" y="119.6" width="7" height="7" fill="#1878a8"/><rect x="775.3" y="122.1" width="3" height="2" fill="#fff" fill-opacity="0.6"/><path d="M46.0 396.6 L56.2 396.6 L61.2 396.6 L66.3 396.6 L91.7 396.6 L117.0 352.1 L142.4 307.5 L167.8 263.0 L193.2 244.0 L218.5 230.9 L243.9 217.7 L269.3 202.0 L320.0 188.8 L370.8 175.7 L421.5 170.4 L472.3 162.5 L523.0 157.2 L573.8 149.4 L675.3 144.1 L776.8 136.2" stroke="#20d0d8" stroke-width="1.1" fill="none"/><rect x="42.5" y="393.1" width="7" height="7" fill="#20d0d8"/><rect x="44.5" y="395.6" width="3" height="2" fill="#fff" fill-opacity="0.6"/><rect x="52.7" y="393.1" width="7" height="7" fill="#20d0d8"/><rect x="54.7" y="395.6" width="3" height="2" fill="#fff" fill-opacity="0.6"/><rect x="57.7" y="393.1" width="7" height="7" fill="#20d0d8"/><rect x="59.7" y="395.6" width="3" height="2" fill="#fff" fill-opacity="0.6"/><rect x="62.8" y="393.1" width="7" height="7" fill="#20d0d8"/><rect x="64.8" y="395.6" width="3" height="2" fill="#fff" fill-opacity="0.6"/><rect x="88.2" y="393.1" width="7" height="7" fill="#20d0d8"/><rect x="90.2" y="395.6" width="3" height="2" fill="#fff" fill-opacity="0.6"/><rect x="113.5" y="348.6" width="7" height="7" fill="#20d0d8"/><rect x="115.5" y="351.1" width="3" height="2" fill="#fff" fill-opacity="0.6"/><rect x="138.9" y="304.0" width="7" height="7" fill="#20d0d8"/><rect x="140.9" y="306.5" width="3" height="2" fill="#fff" fill-opacity="0.6"/><rect x="164.3" y="259.5" width="7" height="7" fill="#20d0d8"/><rect x="166.3" y="262.0" width="3" height="2" fill="#fff" fill-opacity="0.6"/><rect x="189.7" y="240.5" width="7" height="7" fill="#20d0d8"/><rect x="191.7" y="243.0" width="3" height="2" fill="#fff" fill-opacity="0.6"/><rect x="215.0" y="227.4" width="7" height="7" fill="#20d0d8"/><rect x="217.0" y="229.9" width="3" height="2" fill="#fff" fill-opacity="0.6"/><rect x="240.4" y="214.2" width="7" height="7" fill="#20d0d8"/><rect x="242.4" y="216.7" width="3" height="2" fill="#fff" fill-opacity="0.6"/><rect x="265.8" y="198.5" width="7" height="7" fill="#20d0d8"/><rect x="267.8" y="201.0" width="3" height="2" fill="#fff" fill-opacity="0.6"/><rect x="316.5" y="185.3" width="7" height="7" fill="#20d0d8"/><rect x="318.5" y="187.8" width="3" height="2" fill="#fff" fill-opacity="0.6"/><rect x="367.3" y="172.2" width="7" height="7" fill="#20d0d8"/><rect x="369.3" y="174.7" width="3" height="2" fill="#fff" fill-opacity="0.6"/><rect x="418.0" y="166.9" width="7" height="7" fill="#20d0d8"/><rect x="420.0" y="169.4" width="3" height="2" fill="#fff" fill-opacity="0.6"/><rect x="468.8" y="159.0" width="7" height="7" fill="#20d0d8"/><rect x="470.8" y="161.5" width="3" height="2" fill="#fff" fill-opacity="0.6"/><rect x="519.5" y="153.8" width="7" height="7" fill="#20d0d8"/><rect x="521.5" y="156.2" width="3" height="2" fill="#fff" fill-opacity="0.6"/><rect x="570.3" y="145.9" width="7" height="7" fill="#20d0d8"/><rect x="572.3" y="148.4" width="3" height="2" fill="#fff" fill-opacity="0.6"/><rect x="671.8" y="140.6" width="7" height="7" fill="#20d0d8"/><rect x="673.8" y="143.1" width="3" height="2" fill="#fff" fill-opacity="0.6"/><rect x="773.3" y="132.7" width="7" height="7" fill="#20d0d8"/><rect x="775.3" y="135.2" width="3" height="2" fill="#fff" fill-opacity="0.6"/><path d="M46.0 396.6 L56.2 396.6 L61.2 396.6 L66.3 396.6 L91.7 396.6 L117.0 356.3 L142.4 315.9 L167.8 275.6 L193.2 262.5 L218.5 249.3 L243.9 235.3 L269.3 221.2 L320.0 212.3 L370.8 203.2 L421.5 194.3 L472.3 185.3 L523.0 176.3 L573.8 167.3 L675.3 158.3 L776.8 149.4" stroke="#20e870" stroke-width="1.1" fill="none"/><rect x="42.5" y="393.1" width="7" height="7" fill="#20e870"/><rect x="44.5" y="395.6" width="3" height="2" fill="#fff" fill-opacity="0.6"/><rect x="52.7" y="393.1" width="7" height="7" fill="#20e870"/><rect x="54.7" y="395.6" width="3" height="2" fill="#fff" fill-opacity="0.6"/><rect x="57.7" y="393.1" width="7" height="7" fill="#20e870"/><rect x="59.7" y="395.6" width="3" height="2" fill="#fff" fill-opacity="0.6"/><rect x="62.8" y="393.1" width="7" height="7" fill="#20e870"/><rect x="64.8" y="395.6" width="3" height="2" fill="#fff" fill-opacity="0.6"/><rect x="88.2" y="393.1" width="7" height="7" fill="#20e870"/><rect x="90.2" y="395.6" width="3" height="2" fill="#fff" fill-opacity="0.6"/><rect x="113.5" y="352.8" width="7" height="7" fill="#20e870"/><rect x="115.5" y="355.3" width="3" height="2" fill="#fff" fill-opacity="0.6"/><rect x="138.9" y="312.4" width="7" height="7" fill="#20e870"/><rect x="140.9" y="314.9" width="3" height="2" fill="#fff" fill-opacity="0.6"/><rect x="164.3" y="272.1" width="7" height="7" fill="#20e870"/><rect x="166.3" y="274.6" width="3" height="2" fill="#fff" fill-opacity="0.6"/><rect x="189.7" y="259.0" width="7" height="7" fill="#20e870"/><rect x="191.7" y="261.5" width="3" height="2" fill="#fff" fill-opacity="0.6"/><rect x="215.0" y="245.8" width="7" height="7" fill="#20e870"/><rect x="217.0" y="248.3" width="3" height="2" fill="#fff" fill-opacity="0.6"/><rect x="240.4" y="231.8" width="7" height="7" fill="#20e870"/><rect x="242.4" y="234.3" width="3" height="2" fill="#fff" fill-opacity="0.6"/><rect x="265.8" y="217.7" width="7" height="7" fill="#20e870"/><rect x="267.8" y="220.2" width="3" height="2" fill="#fff" fill-opacity="0.6"/><rect x="316.5" y="208.8" width="7" height="7" fill="#20e870"/><rect x="318.5" y="211.3" width="3" height="2" fill="#fff" fill-opacity="0.6"/><rect x="367.3" y="199.7" width="7" height="7" fill="#20e870"/><rect x="369.3" y="202.2" width="3" height="2" fill="#fff" fill-opacity="0.6"/><rect x="418.0" y="190.8" width="7" height="7" fill="#20e870"/><rect x="420.0" y="193.3" width="3" height="2" fill="#fff" fill-opacity="0.6"/><rect x="468.8" y="181.8" width="7" height="7" fill="#20e870"/><rect x="470.8" y="184.3" width="3" height="2" fill="#fff" fill-opacity="0.6"/><rect x="519.5" y="172.8" width="7" height="7" fill="#20e870"/><rect x="521.5" y="175.3" width="3" height="2" fill="#fff" fill-opacity="0.6"/><rect x="570.3" y="163.8" width="7" height="7" fill="#20e870"/><rect x="572.3" y="166.3" width="3" height="2" fill="#fff" fill-opacity="0.6"/><rect x="671.8" y="154.8" width="7" height="7" fill="#20e870"/><rect x="673.8" y="157.3" width="3" height="2" fill="#fff" fill-opacity="0.6"/><rect x="773.3" y="145.9" width="7" height="7" fill="#20e870"/><rect x="775.3" y="148.4" width="3" height="2" fill="#fff" fill-opacity="0.6"/><path d="M46.0 509.7 L56.2 489.3 L61.2 468.9 L66.3 448.5 L91.7 428.1 L117.0 396.9 L142.4 365.7 L167.8 334.4 L193.2 303.2 L218.5 287.7 L243.9 274.4 L269.3 261.1 L320.0 251.7 L370.8 242.4 L421.5 233.0 L472.3 223.6 L523.0 214.3 L573.8 204.9 L675.3 195.5 L776.8 186.2" stroke="#10c030" stroke-width="1.1" fill="none"/><rect x="42.5" y="506.2" width="7" height="7" fill="#10c030"/><rect x="44.5" y="508.7" width="3" height="2" fill="#fff" fill-opacity="0.6"/><rect x="52.7" y="485.8" width="7" height="7" fill="#10c030"/><rect x="54.7" y="488.3" width="3" height="2" fill="#fff" fill-opacity="0.6"/><rect x="57.7" y="465.4" width="7" height="7" fill="#10c030"/><rect x="59.7" y="467.9" width="3" height="2" fill="#fff" fill-opacity="0.6"/><rect x="62.8" y="445.0" width="7" height="7" fill="#10c030"/><rect x="64.8" y="447.5" width="3" height="2" fill="#fff" fill-opacity="0.6"/><rect x="88.2" y="424.6" width="7" height="7" fill="#10c030"/><rect x="90.2" y="427.1" width="3" height="2" fill="#fff" fill-opacity="0.6"/><rect x="113.5" y="393.4" width="7" height="7" fill="#10c030"/><rect x="115.5" y="395.9" width="3" height="2" fill="#fff" fill-opacity="0.6"/><rect x="138.9" y="362.2" width="7" height="7" fill="#10c030"/><rect x="140.9" y="364.7" width="3" height="2" fill="#fff" fill-opacity="0.6"/><rect x="164.3" y="330.9" width="7" height="7" fill="#10c030"/><rect x="166.3" y="333.4" width="3" height="2" fill="#fff" fill-opacity="0.6"/><rect x="189.7" y="299.7" width="7" height="7" fill="#10c030"/><rect x="191.7" y="302.2" width="3" height="2" fill="#fff" fill-opacity="0.6"/><rect x="215.0" y="284.2" width="7" height="7" fill="#10c030"/><rect x="217.0" y="286.7" width="3" height="2" fill="#fff" fill-opacity="0.6"/><rect x="240.4" y="270.9" width="7" height="7" fill="#10c030"/><rect x="242.4" y="273.4" width="3" height="2" fill="#fff" fill-opacity="0.6"/><rect x="265.8" y="257.6" width="7" height="7" fill="#10c030"/><rect x="267.8" y="260.1" width="3" height="2" fill="#fff" fill-opacity="0.6"/><rect x="316.5" y="248.2" width="7" height="7" fill="#10c030"/><rect x="318.5" y="250.7" width="3" height="2" fill="#fff" fill-opacity="0.6"/><rect x="367.3" y="238.9" width="7" height="7" fill="#10c030"/><rect x="369.3" y="241.4" width="3" height="2" fill="#fff" fill-opacity="0.6"/><rect x="418.0" y="229.5" width="7" height="7" fill="#10c030"/><rect x="420.0" y="232.0" width="3" height="2" fill="#fff" fill-opacity="0.6"/><rect x="468.8" y="220.1" width="7" height="7" fill="#10c030"/><rect x="470.8" y="222.6" width="3" height="2" fill="#fff" fill-opacity="0.6"/><rect x="519.5" y="210.8" width="7" height="7" fill="#10c030"/><rect x="521.5" y="213.3" width="3" height="2" fill="#fff" fill-opacity="0.6"/><rect x="570.3" y="201.4" width="7" height="7" fill="#10c030"/><rect x="572.3" y="203.9" width="3" height="2" fill="#fff" fill-opacity="0.6"/><rect x="671.8" y="192.0" width="7" height="7" fill="#10c030"/><rect x="673.8" y="194.5" width="3" height="2" fill="#fff" fill-opacity="0.6"/><rect x="773.3" y="182.7" width="7" height="7" fill="#10c030"/><rect x="775.3" y="185.2" width="3" height="2" fill="#fff" fill-opacity="0.6"/><path d="M46.0 542.1 L56.2 520.4 L61.2 498.7 L66.3 477.1 L91.7 455.3 L117.0 427.8 L142.4 399.8 L167.8 372.0 L193.2 344.0 L218.5 326.0 L243.9 313.5 L269.3 301.1 L320.0 291.3 L370.8 281.5 L421.5 271.8 L472.3 262.0 L523.0 252.2 L573.8 242.5 L675.3 232.8 L776.8 223.0" stroke="#18d020" stroke-width="1.1" fill="none"/><rect x="42.5" y="538.6" width="7" height="7" fill="#18d020"/><rect x="44.5" y="541.1" width="3" height="2" fill="#fff" fill-opacity="0.6"/><rect x="52.7" y="516.9" width="7" height="7" fill="#18d020"/><rect x="54.7" y="519.4" width="3" height="2" fill="#fff" fill-opacity="0.6"/><rect x="57.7" y="495.2" width="7" height="7" fill="#18d020"/><rect x="59.7" y="497.7" width="3" height="2" fill="#fff" fill-opacity="0.6"/><rect x="62.8" y="473.6" width="7" height="7" fill="#18d020"/><rect x="64.8" y="476.1" width="3" height="2" fill="#fff" fill-opacity="0.6"/><rect x="88.2" y="451.8" width="7" height="7" fill="#18d020"/><rect x="90.2" y="454.3" width="3" height="2" fill="#fff" fill-opacity="0.6"/><rect x="113.5" y="424.3" width="7" height="7" fill="#18d020"/><rect x="115.5" y="426.8" width="3" height="2" fill="#fff" fill-opacity="0.6"/><rect x="138.9" y="396.3" width="7" height="7" fill="#18d020"/><rect x="140.9" y="398.8" width="3" height="2" fill="#fff" fill-opacity="0.6"/><rect x="164.3" y="368.5" width="7" height="7" fill="#18d020"/><rect x="166.3" y="371.0" width="3" height="2" fill="#fff" fill-opacity="0.6"/><rect x="189.7" y="340.5" width="7" height="7" fill="#18d020"/><rect x="191.7" y="343.0" width="3" height="2" fill="#fff" fill-opacity="0.6"/><rect x="215.0" y="322.5" width="7" height="7" fill="#18d020"/><rect x="217.0" y="325.0" width="3" height="2" fill="#fff" fill-opacity="0.6"/><rect x="240.4" y="310.0" width="7" height="7" fill="#18d020"/><rect x="242.4" y="312.5" width="3" height="2" fill="#fff" fill-opacity="0.6"/><rect x="265.8" y="297.6" width="7" height="7" fill="#18d020"/><rect x="267.8" y="300.1" width="3" height="2" fill="#fff" fill-opacity="0.6"/><rect x="316.5" y="287.8" width="7" height="7" fill="#18d020"/><rect x="318.5" y="290.3" width="3" height="2" fill="#fff" fill-opacity="0.6"/><rect x="367.3" y="278.0" width="7" height="7" fill="#18d020"/><rect x="369.3" y="280.5" width="3" height="2" fill="#fff" fill-opacity="0.6"/><rect x="418.0" y="268.3" width="7" height="7" fill="#18d020"/><rect x="420.0" y="270.8" width="3" height="2" fill="#fff" fill-opacity="0.6"/><rect x="468.8" y="258.5" width="7" height="7" fill="#18d020"/><rect x="470.8" y="261.0" width="3" height="2" fill="#fff" fill-opacity="0.6"/><rect x="519.5" y="248.7" width="7" height="7" fill="#18d020"/><rect x="521.5" y="251.2" width="3" height="2" fill="#fff" fill-opacity="0.6"/><rect x="570.3" y="239.0" width="7" height="7" fill="#18d020"/><rect x="572.3" y="241.5" width="3" height="2" fill="#fff" fill-opacity="0.6"/><rect x="671.8" y="229.3" width="7" height="7" fill="#18d020"/><rect x="673.8" y="231.8" width="3" height="2" fill="#fff" fill-opacity="0.6"/><rect x="773.3" y="219.5" width="7" height="7" fill="#18d020"/><rect x="775.3" y="222.0" width="3" height="2" fill="#fff" fill-opacity="0.6"/><path d="M46.0 553.5 L56.2 530.5 L61.2 507.5 L66.3 484.4 L91.7 461.5 L117.0 437.7 L142.4 413.0 L167.8 388.4 L193.2 363.7 L218.5 343.3 L243.9 331.6 L269.3 319.9 L320.0 309.7 L370.8 299.6 L421.5 289.5 L472.3 279.3 L523.0 269.2 L573.8 259.1 L675.3 248.9 L776.8 238.8" stroke="#20b020" stroke-width="1.1" fill="none"/><rect x="42.5" y="550.0" width="7" height="7" fill="#20b020"/><rect x="44.5" y="552.5" width="3" height="2" fill="#fff" fill-opacity="0.6"/><rect x="52.7" y="527.0" width="7" height="7" fill="#20b020"/><rect x="54.7" y="529.5" width="3" height="2" fill="#fff" fill-opacity="0.6"/><rect x="57.7" y="504.0" width="7" height="7" fill="#20b020"/><rect x="59.7" y="506.5" width="3" height="2" fill="#fff" fill-opacity="0.6"/><rect x="62.8" y="480.9" width="7" height="7" fill="#20b020"/><rect x="64.8" y="483.4" width="3" height="2" fill="#fff" fill-opacity="0.6"/><rect x="88.2" y="458.0" width="7" height="7" fill="#20b020"/><rect x="90.2" y="460.5" width="3" height="2" fill="#fff" fill-opacity="0.6"/><rect x="113.5" y="434.2" width="7" height="7" fill="#20b020"/><rect x="115.5" y="436.7" width="3" height="2" fill="#fff" fill-opacity="0.6"/><rect x="138.9" y="409.5" width="7" height="7" fill="#20b020"/><rect x="140.9" y="412.0" width="3" height="2" fill="#fff" fill-opacity="0.6"/><rect x="164.3" y="384.9" width="7" height="7" fill="#20b020"/><rect x="166.3" y="387.4" width="3" height="2" fill="#fff" fill-opacity="0.6"/><rect x="189.7" y="360.2" width="7" height="7" fill="#20b020"/><rect x="191.7" y="362.7" width="3" height="2" fill="#fff" fill-opacity="0.6"/><rect x="215.0" y="339.8" width="7" height="7" fill="#20b020"/><rect x="217.0" y="342.3" width="3" height="2" fill="#fff" fill-opacity="0.6"/><rect x="240.4" y="328.1" width="7" height="7" fill="#20b020"/><rect x="242.4" y="330.6" width="3" height="2" fill="#fff" fill-opacity="0.6"/><rect x="265.8" y="316.4" width="7" height="7" fill="#20b020"/><rect x="267.8" y="318.9" width="3" height="2" fill="#fff" fill-opacity="0.6"/><rect x="316.5" y="306.2" width="7" height="7" fill="#20b020"/><rect x="318.5" y="308.7" width="3" height="2" fill="#fff" fill-opacity="0.6"/><rect x="367.3" y="296.1" width="7" height="7" fill="#20b020"/><rect x="369.3" y="298.6" width="3" height="2" fill="#fff" fill-opacity="0.6"/><rect x="418.0" y="286.0" width="7" height="7" fill="#20b020"/><rect x="420.0" y="288.5" width="3" height="2" fill="#fff" fill-opacity="0.6"/><rect x="468.8" y="275.8" width="7" height="7" fill="#20b020"/><rect x="470.8" y="278.3" width="3" height="2" fill="#fff" fill-opacity="0.6"/><rect x="519.5" y="265.7" width="7" height="7" fill="#20b020"/><rect x="521.5" y="268.2" width="3" height="2" fill="#fff" fill-opacity="0.6"/><rect x="570.3" y="255.6" width="7" height="7" fill="#20b020"/><rect x="572.3" y="258.1" width="3" height="2" fill="#fff" fill-opacity="0.6"/><rect x="671.8" y="245.4" width="7" height="7" fill="#20b020"/><rect x="673.8" y="247.9" width="3" height="2" fill="#fff" fill-opacity="0.6"/><rect x="773.3" y="235.3" width="7" height="7" fill="#20b020"/><rect x="775.3" y="237.8" width="3" height="2" fill="#fff" fill-opacity="0.6"/><path d="M46.0 585.9 L56.2 561.6 L61.2 537.2 L66.3 512.9 L91.7 488.6 L117.0 459.7 L142.4 430.8 L167.8 412.4 L193.2 391.3 L218.5 370.3 L243.9 351.9 L269.3 336.1 L320.0 328.2 L370.8 320.3 L421.5 312.4 L472.3 304.5 L523.0 296.6 L573.8 286.1 L675.3 278.2 L776.8 270.3" stroke="#58b010" stroke-width="1.1" fill="none"/><rect x="42.5" y="582.4" width="7" height="7" fill="#58b010"/><rect x="44.5" y="584.9" width="3" height="2" fill="#fff" fill-opacity="0.6"/><rect x="52.7" y="558.1" width="7" height="7" fill="#58b010"/><rect x="54.7" y="560.6" width="3" height="2" fill="#fff" fill-opacity="0.6"/><rect x="57.7" y="533.7" width="7" height="7" fill="#58b010"/><rect x="59.7" y="536.2" width="3" height="2" fill="#fff" fill-opacity="0.6"/><rect x="62.8" y="509.4" width="7" height="7" fill="#58b010"/><rect x="64.8" y="511.9" width="3" height="2" fill="#fff" fill-opacity="0.6"/><rect x="88.2" y="485.1" width="7" height="7" fill="#58b010"/><rect x="90.2" y="487.6" width="3" height="2" fill="#fff" fill-opacity="0.6"/><rect x="113.5" y="456.2" width="7" height="7" fill="#58b010"/><rect x="115.5" y="458.7" width="3" height="2" fill="#fff" fill-opacity="0.6"/><rect x="138.9" y="427.3" width="7" height="7" fill="#58b010"/><rect x="140.9" y="429.8" width="3" height="2" fill="#fff" fill-opacity="0.6"/><rect x="164.3" y="408.9" width="7" height="7" fill="#58b010"/><rect x="166.3" y="411.4" width="3" height="2" fill="#fff" fill-opacity="0.6"/><rect x="189.7" y="387.8" width="7" height="7" fill="#58b010"/><rect x="191.7" y="390.3" width="3" height="2" fill="#fff" fill-opacity="0.6"/><rect x="215.0" y="366.8" width="7" height="7" fill="#58b010"/><rect x="217.0" y="369.3" width="3" height="2" fill="#fff" fill-opacity="0.6"/><rect x="240.4" y="348.4" width="7" height="7" fill="#58b010"/><rect x="242.4" y="350.9" width="3" height="2" fill="#fff" fill-opacity="0.6"/><rect x="265.8" y="332.6" width="7" height="7" fill="#58b010"/><rect x="267.8" y="335.1" width="3" height="2" fill="#fff" fill-opacity="0.6"/><rect x="316.5" y="324.7" width="7" height="7" fill="#58b010"/><rect x="318.5" y="327.2" width="3" height="2" fill="#fff" fill-opacity="0.6"/><rect x="367.3" y="316.8" width="7" height="7" fill="#58b010"/><rect x="369.3" y="319.3" width="3" height="2" fill="#fff" fill-opacity="0.6"/><rect x="418.0" y="308.9" width="7" height="7" fill="#58b010"/><rect x="420.0" y="311.4" width="3" height="2" fill="#fff" fill-opacity="0.6"/><rect x="468.8" y="301.0" width="7" height="7" fill="#58b010"/><rect x="470.8" y="303.5" width="3" height="2" fill="#fff" fill-opacity="0.6"/><rect x="519.5" y="293.1" width="7" height="7" fill="#58b010"/><rect x="521.5" y="295.6" width="3" height="2" fill="#fff" fill-opacity="0.6"/><rect x="570.3" y="282.6" width="7" height="7" fill="#58b010"/><rect x="572.3" y="285.1" width="3" height="2" fill="#fff" fill-opacity="0.6"/><rect x="671.8" y="274.7" width="7" height="7" fill="#58b010"/><rect x="673.8" y="277.2" width="3" height="2" fill="#fff" fill-opacity="0.6"/><rect x="773.3" y="266.8" width="7" height="7" fill="#58b010"/><rect x="775.3" y="269.3" width="3" height="2" fill="#fff" fill-opacity="0.6"/><path d="M46.0 564.9 L56.2 564.9 L61.2 564.9 L66.3 520.2 L91.7 488.6 L117.0 467.6 L142.4 454.4 L167.8 433.4 L193.2 412.4 L218.5 394.0 L243.9 372.9 L269.3 359.8 L320.0 351.9 L370.8 344.0 L421.5 336.1 L472.3 328.2 L523.0 322.9 L573.8 315.0 L675.3 307.2 L776.8 299.3" stroke="#b0b010" stroke-width="1.1" fill="none"/><rect x="42.5" y="561.4" width="7" height="7" fill="#b0b010"/><rect x="44.5" y="563.9" width="3" height="2" fill="#fff" fill-opacity="0.6"/><rect x="52.7" y="561.4" width="7" height="7" fill="#b0b010"/><rect x="54.7" y="563.9" width="3" height="2" fill="#fff" fill-opacity="0.6"/><rect x="57.7" y="561.4" width="7" height="7" fill="#b0b010"/><rect x="59.7" y="563.9" width="3" height="2" fill="#fff" fill-opacity="0.6"/><rect x="62.8" y="516.7" width="7" height="7" fill="#b0b010"/><rect x="64.8" y="519.2" width="3" height="2" fill="#fff" fill-opacity="0.6"/><rect x="88.2" y="485.1" width="7" height="7" fill="#b0b010"/><rect x="90.2" y="487.6" width="3" height="2" fill="#fff" fill-opacity="0.6"/><rect x="113.5" y="464.1" width="7" height="7" fill="#b0b010"/><rect x="115.5" y="466.6" width="3" height="2" fill="#fff" fill-opacity="0.6"/><rect x="138.9" y="450.9" width="7" height="7" fill="#b0b010"/><rect x="140.9" y="453.4" width="3" height="2" fill="#fff" fill-opacity="0.6"/><rect x="164.3" y="429.9" width="7" height="7" fill="#b0b010"/><rect x="166.3" y="432.4" width="3" height="2" fill="#fff" fill-opacity="0.6"/><rect x="189.7" y="408.9" width="7" height="7" fill="#b0b010"/><rect x="191.7" y="411.4" width="3" height="2" fill="#fff" fill-opacity="0.6"/><rect x="215.0" y="390.5" width="7" height="7" fill="#b0b010"/><rect x="217.0" y="393.0" width="3" height="2" fill="#fff" fill-opacity="0.6"/><rect x="240.4" y="369.4" width="7" height="7" fill="#b0b010"/><rect x="242.4" y="371.9" width="3" height="2" fill="#fff" fill-opacity="0.6"/><rect x="265.8" y="356.3" width="7" height="7" fill="#b0b010"/><rect x="267.8" y="358.8" width="3" height="2" fill="#fff" fill-opacity="0.6"/><rect x="316.5" y="348.4" width="7" height="7" fill="#b0b010"/><rect x="318.5" y="350.9" width="3" height="2" fill="#fff" fill-opacity="0.6"/><rect x="367.3" y="340.5" width="7" height="7" fill="#b0b010"/><rect x="369.3" y="343.0" width="3" height="2" fill="#fff" fill-opacity="0.6"/><rect x="418.0" y="332.6" width="7" height="7" fill="#b0b010"/><rect x="420.0" y="335.1" width="3" height="2" fill="#fff" fill-opacity="0.6"/><rect x="468.8" y="324.7" width="7" height="7" fill="#b0b010"/><rect x="470.8" y="327.2" width="3" height="2" fill="#fff" fill-opacity="0.6"/><rect x="519.5" y="319.4" width="7" height="7" fill="#b0b010"/><rect x="521.5" y="321.9" width="3" height="2" fill="#fff" fill-opacity="0.6"/><rect x="570.3" y="311.5" width="7" height="7" fill="#b0b010"/><rect x="572.3" y="314.0" width="3" height="2" fill="#fff" fill-opacity="0.6"/><rect x="671.8" y="303.7" width="7" height="7" fill="#b0b010"/><rect x="673.8" y="306.2" width="3" height="2" fill="#fff" fill-opacity="0.6"/><rect x="773.3" y="295.8" width="7" height="7" fill="#b0b010"/><rect x="775.3" y="298.3" width="3" height="2" fill="#fff" fill-opacity="0.6"/><path d="M46.0 570.2 L56.2 570.2 L61.2 570.2 L66.3 536.0 L91.7 509.7 L117.0 491.3 L142.4 483.4 L167.8 462.3 L193.2 443.9 L218.5 438.7 L243.9 428.1 L269.3 404.5 L320.0 396.6 L370.8 388.7 L421.5 383.4 L472.3 375.5 L523.0 370.3 L573.8 362.4 L675.3 354.5 L776.8 349.2" stroke="#c8c810" stroke-width="1.1" fill="none"/><rect x="42.5" y="566.7" width="7" height="7" fill="#c8c810"/><rect x="44.5" y="569.2" width="3" height="2" fill="#fff" fill-opacity="0.6"/><rect x="52.7" y="566.7" width="7" height="7" fill="#c8c810"/><rect x="54.7" y="569.2" width="3" height="2" fill="#fff" fill-opacity="0.6"/><rect x="57.7" y="566.7" width="7" height="7" fill="#c8c810"/><rect x="59.7" y="569.2" width="3" height="2" fill="#fff" fill-opacity="0.6"/><rect x="62.8" y="532.5" width="7" height="7" fill="#c8c810"/><rect x="64.8" y="535.0" width="3" height="2" fill="#fff" fill-opacity="0.6"/><rect x="88.2" y="506.2" width="7" height="7" fill="#c8c810"/><rect x="90.2" y="508.7" width="3" height="2" fill="#fff" fill-opacity="0.6"/><rect x="113.5" y="487.8" width="7" height="7" fill="#c8c810"/><rect x="115.5" y="490.3" width="3" height="2" fill="#fff" fill-opacity="0.6"/><rect x="138.9" y="479.9" width="7" height="7" fill="#c8c810"/><rect x="140.9" y="482.4" width="3" height="2" fill="#fff" fill-opacity="0.6"/><rect x="164.3" y="458.8" width="7" height="7" fill="#c8c810"/><rect x="166.3" y="461.3" width="3" height="2" fill="#fff" fill-opacity="0.6"/><rect x="189.7" y="440.4" width="7" height="7" fill="#c8c810"/><rect x="191.7" y="442.9" width="3" height="2" fill="#fff" fill-opacity="0.6"/><rect x="215.0" y="435.2" width="7" height="7" fill="#c8c810"/><rect x="217.0" y="437.7" width="3" height="2" fill="#fff" fill-opacity="0.6"/><rect x="240.4" y="424.6" width="7" height="7" fill="#c8c810"/><rect x="242.4" y="427.1" width="3" height="2" fill="#fff" fill-opacity="0.6"/><rect x="265.8" y="401.0" width="7" height="7" fill="#c8c810"/><rect x="267.8" y="403.5" width="3" height="2" fill="#fff" fill-opacity="0.6"/><rect x="316.5" y="393.1" width="7" height="7" fill="#c8c810"/><rect x="318.5" y="395.6" width="3" height="2" fill="#fff" fill-opacity="0.6"/><rect x="367.3" y="385.2" width="7" height="7" fill="#c8c810"/><rect x="369.3" y="387.7" width="3" height="2" fill="#fff" fill-opacity="0.6"/><rect x="418.0" y="379.9" width="7" height="7" fill="#c8c810"/><rect x="420.0" y="382.4" width="3" height="2" fill="#fff" fill-opacity="0.6"/><rect x="468.8" y="372.0" width="7" height="7" fill="#c8c810"/><rect x="470.8" y="374.5" width="3" height="2" fill="#fff" fill-opacity="0.6"/><rect x="519.5" y="366.8" width="7" height="7" fill="#c8c810"/><rect x="521.5" y="369.3" width="3" height="2" fill="#fff" fill-opacity="0.6"/><rect x="570.3" y="358.9" width="7" height="7" fill="#c8c810"/><rect x="572.3" y="361.4" width="3" height="2" fill="#fff" fill-opacity="0.6"/><rect x="671.8" y="351.0" width="7" height="7" fill="#c8c810"/><rect x="673.8" y="353.5" width="3" height="2" fill="#fff" fill-opacity="0.6"/><rect x="773.3" y="345.7" width="7" height="7" fill="#c8c810"/><rect x="775.3" y="348.2" width="3" height="2" fill="#fff" fill-opacity="0.6"/><path d="M46.0 580.7 L56.2 580.7 L61.2 580.7 L66.3 554.4 L91.7 536.0 L117.0 520.2 L142.4 514.9 L167.8 501.8 L193.2 486.0 L218.5 476.1 L243.9 466.2 L269.3 456.4 L320.0 446.5 L370.8 436.0 L421.5 428.1 L472.3 422.9 L523.0 417.6 L573.8 412.4 L675.3 412.4 L776.8 412.4" stroke="#c83810" stroke-width="1.1" fill="none"/><rect x="42.5" y="577.2" width="7" height="7" fill="#c83810"/><rect x="44.5" y="579.7" width="3" height="2" fill="#fff" fill-opacity="0.6"/><rect x="52.7" y="577.2" width="7" height="7" fill="#c83810"/><rect x="54.7" y="579.7" width="3" height="2" fill="#fff" fill-opacity="0.6"/><rect x="57.7" y="577.2" width="7" height="7" fill="#c83810"/><rect x="59.7" y="579.7" width="3" height="2" fill="#fff" fill-opacity="0.6"/><rect x="62.8" y="550.9" width="7" height="7" fill="#c83810"/><rect x="64.8" y="553.4" width="3" height="2" fill="#fff" fill-opacity="0.6"/><rect x="88.2" y="532.5" width="7" height="7" fill="#c83810"/><rect x="90.2" y="535.0" width="3" height="2" fill="#fff" fill-opacity="0.6"/><rect x="113.5" y="516.7" width="7" height="7" fill="#c83810"/><rect x="115.5" y="519.2" width="3" height="2" fill="#fff" fill-opacity="0.6"/><rect x="138.9" y="511.4" width="7" height="7" fill="#c83810"/><rect x="140.9" y="513.9" width="3" height="2" fill="#fff" fill-opacity="0.6"/><rect x="164.3" y="498.3" width="7" height="7" fill="#c83810"/><rect x="166.3" y="500.8" width="3" height="2" fill="#fff" fill-opacity="0.6"/><rect x="189.7" y="482.5" width="7" height="7" fill="#c83810"/><rect x="191.7" y="485.0" width="3" height="2" fill="#fff" fill-opacity="0.6"/><rect x="215.0" y="472.6" width="7" height="7" fill="#c83810"/><rect x="217.0" y="475.1" width="3" height="2" fill="#fff" fill-opacity="0.6"/><rect x="240.4" y="462.7" width="7" height="7" fill="#c83810"/><rect x="242.4" y="465.2" width="3" height="2" fill="#fff" fill-opacity="0.6"/><rect x="265.8" y="452.9" width="7" height="7" fill="#c83810"/><rect x="267.8" y="455.4" width="3" height="2" fill="#fff" fill-opacity="0.6"/><rect x="316.5" y="443.0" width="7" height="7" fill="#c83810"/><rect x="318.5" y="445.5" width="3" height="2" fill="#fff" fill-opacity="0.6"/><rect x="367.3" y="432.5" width="7" height="7" fill="#c83810"/><rect x="369.3" y="435.0" width="3" height="2" fill="#fff" fill-opacity="0.6"/><rect x="418.0" y="424.6" width="7" height="7" fill="#c83810"/><rect x="420.0" y="427.1" width="3" height="2" fill="#fff" fill-opacity="0.6"/><rect x="468.8" y="419.4" width="7" height="7" fill="#c83810"/><rect x="470.8" y="421.9" width="3" height="2" fill="#fff" fill-opacity="0.6"/><rect x="519.5" y="414.1" width="7" height="7" fill="#c83810"/><rect x="521.5" y="416.6" width="3" height="2" fill="#fff" fill-opacity="0.6"/><rect x="570.3" y="408.9" width="7" height="7" fill="#c83810"/><rect x="572.3" y="411.4" width="3" height="2" fill="#fff" fill-opacity="0.6"/><rect x="671.8" y="408.9" width="7" height="7" fill="#c83810"/><rect x="673.8" y="411.4" width="3" height="2" fill="#fff" fill-opacity="0.6"/><rect x="773.3" y="408.9" width="7" height="7" fill="#c83810"/><rect x="775.3" y="411.4" width="3" height="2" fill="#fff" fill-opacity="0.6"/><rect x="57.3" y="389.6" width="14" height="14" fill="none" stroke="#2a50a8" stroke-width="2.2"/></svg><svg class="a" style="left:784px;top:-2px;overflow:visible" width="14" height="22"><path d="M1 1V17L5 13L8 20L11 19L8 12H13Z" fill="#fff" stroke="#000" stroke-width="1.1"/></svg></div>
</div>
<div class="a trkv" style="left:1705px;top:0px;width:21px;height:914px"></div>
<div class="a sarrow" style="left:1707px;top:2px;width:17px;height:18px"><svg class="a" style="left:2px;top:4px" width="12" height="9"><path d="M1.5 7.5L6 3L10.5 7.5" stroke="#4d6185" stroke-width="2.3" fill="none"/></svg></div>
<div class="a sthumb" style="left:1707px;top:30px;width:17px;height:827px"><div class="a" style="left:4px;top:408px;width:8px;height:8px;background:repeating-linear-gradient(180deg,#eef2ff 0,#eef2ff 1px,#9fb4e8 1px,#9fb4e8 2px)"></div></div>
<div class="a sarrow" style="left:1707px;top:894px;width:17px;height:18px"><svg class="a" style="left:2px;top:5px" width="12" height="9"><path d="M1.5 1.5L6 6L10.5 1.5" stroke="#4d6185" stroke-width="2.3" fill="none"/></svg></div>
</div>
<div class="a trkh" style="left:1px;top:997px;width:1704px;height:20px"></div>
<div class="a" style="left:1705px;top:997px;width:22px;height:20px;background:#ECE9D8"></div>
<div class="a sarrow" style="left:2px;top:998px;width:19px;height:17px"><svg class="a" style="left:4px;top:2px" width="9" height="12"><path d="M7 1.5L2.5 6L7 10.5" stroke="#4d6185" stroke-width="2.3" fill="none"/></svg></div>
<div class="a sthumbh" style="left:22px;top:998px;width:1634px;height:17px"><div class="a" style="left:814px;top:4px;width:8px;height:8px;background:repeating-linear-gradient(90deg,#eef2ff 0,#eef2ff 1px,#9fb4e8 1px,#9fb4e8 2px)"></div></div>
<div class="a sarrow" style="left:1686px;top:998px;width:18px;height:17px"><svg class="a" style="left:5px;top:2px" width="9" height="12"><path d="M2 1.5L6.5 6L2 10.5" stroke="#4d6185" stroke-width="2.3" fill="none"/></svg></div>
</div>
</body></html>
